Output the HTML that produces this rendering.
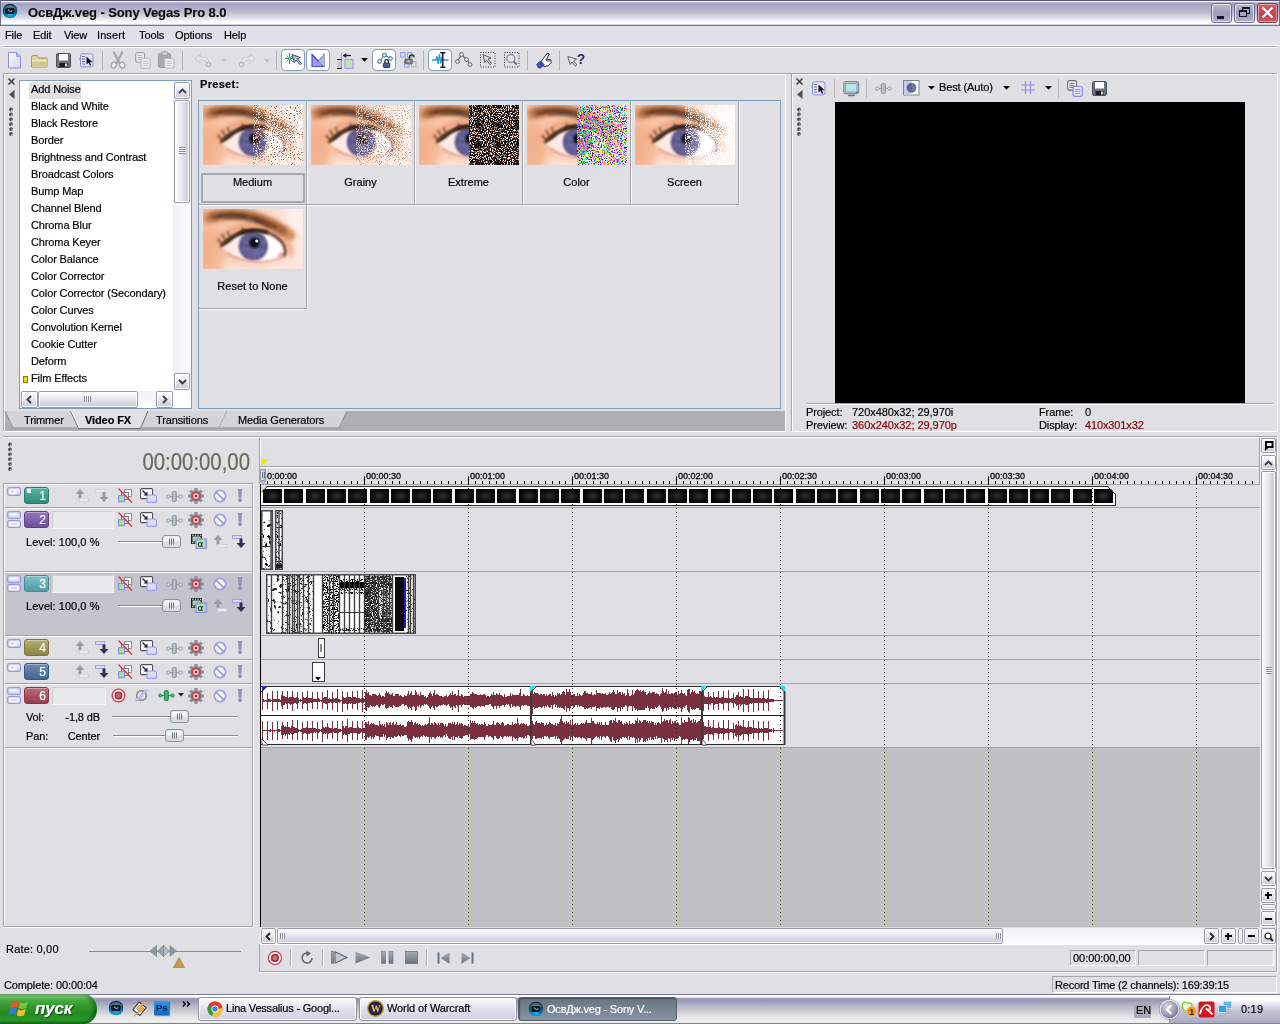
<!DOCTYPE html>
<html><head><meta charset="utf-8"><title>ОсвДж.veg - Sony Vegas Pro 8.0</title>
<style>
html,body{margin:0;padding:0}
body{width:1280px;height:1024px;position:relative;overflow:hidden;background:#e0dfe3;font:11px "Liberation Sans",sans-serif;letter-spacing:-0.12px;color:#000}
.a,.a *{position:absolute;box-sizing:border-box}
.t{position:absolute;white-space:nowrap;line-height:13px;-webkit-text-stroke:.18px currentColor}
svg{position:absolute;overflow:visible}
.hl{position:absolute;height:1px}
.vl{position:absolute;width:1px}
/* XP silver scrollbar button */
.sb{position:absolute;box-sizing:border-box;border:1px solid #9a9aae;border-radius:2px;background:linear-gradient(180deg,#fefefe 0%,#e4e4ee 50%,#c9c9d9 100%);box-shadow:inset 0 0 0 1px #fff}
.sbv{position:absolute;box-sizing:border-box;border:1px solid #9a9aae;border-radius:2px;background:linear-gradient(90deg,#fefefe 0%,#e4e4ee 50%,#c6c6d6 100%);box-shadow:inset 0 0 0 1px #fff}
.tog{position:absolute;box-sizing:border-box;border:1px solid #8a9db4;border-radius:4px;background:#fff}
.sep{position:absolute;width:1px;background:#b4b4b8}
.fld{position:absolute;box-sizing:border-box;border:1px solid;border-color:#a8a8ac #fff #fff #a8a8ac}
</style></head>
<body>
<div style="position:absolute;left:0;top:0;width:1280px;height:1024px;will-change:transform">
<!-- 10_title.html -->
<div class="a" style="left:0;top:0;width:1280px;height:26px;background:linear-gradient(180deg,#56567c 0,#56567c 1px,#f0f0f8 1px,#f0f0f8 2px,#b8b8d0 2px,#b8b8d0 3px,#a4a4c0 3px,#a6a6c2 5px,#b4b4cc 10px,#c6c6d8 14px,#dedee8 18px,#f6f6fa 21px,#ffffff 22.5px,#ffffff 24px,#d2d2de 24px,#d2d2de 25px,#74749a 25px,#74749a 26px)">
  <div style="left:0;top:0;width:1px;height:26px;background:#6e6e8f"></div>
  <div style="left:1279px;top:0;width:1px;height:26px;background:#6e6e8f"></div>
  <svg style="left:2px;top:3px" width="16" height="16" viewBox="0 0 16 16">
    <defs><radialGradient id="vg" cx="50%" cy="75%" r="70%"><stop offset="0" stop-color="#19b0ee"/><stop offset="0.55" stop-color="#0b74ad"/><stop offset="1" stop-color="#06243c"/></radialGradient></defs>
    <circle cx="8" cy="8" r="7.3" fill="url(#vg)"/>
    <path d="M2 6a6.5 6.5 0 0 1 12 0z" fill="#5f7f92" opacity=".75"/>
    <rect x="3.3" y="5" width="9.2" height="6" rx="1" fill="#17191d"/>
    <path d="M6 6.7l2.5 2.2" stroke="#6fd08c" stroke-width="1.1"/><path d="M8.6 9l1.6-1.7" stroke="#a98ae0" stroke-width="1.1"/>
  </svg>
  <div class="t" style="left:28px;top:5px;font:bold 13px 'Liberation Sans',sans-serif;line-height:15px;letter-spacing:-0.1px;color:#0a0a0a;text-shadow:0 0 1px rgba(255,255,255,.5)">ОсвДж.veg - Sony Vegas Pro 8.0</div>
  <!-- window buttons -->
  <div style="left:1211px;top:3px;width:21px;height:20px;border:1px solid #6e6e92;border-radius:3px;background:linear-gradient(180deg,#b9b9d2,#9c9cbb 55%,#b1b1cc);box-shadow:inset 0 0 0 1px rgba(255,255,255,.65)"><div style="left:5px;top:12px;width:7px;height:3px;background:#14142a"></div></div>
  <div style="left:1234px;top:3px;width:21px;height:20px;border:1px solid #6e6e92;border-radius:3px;background:linear-gradient(180deg,#b9b9d2,#9c9cbb 55%,#b1b1cc);box-shadow:inset 0 0 0 1px rgba(255,255,255,.65)">
     <div style="left:7px;top:3px;width:8px;height:7px;border:1px solid #14142a;border-top-width:2px"></div>
     <div style="left:4px;top:6px;width:8px;height:7px;border:1px solid #14142a;border-top-width:2px;background:#a5a5c2"></div></div>
  <div style="left:1257px;top:3px;width:21px;height:20px;border:1px solid #7e3a46;border-radius:3px;background:linear-gradient(180deg,#d4616a,#c2404b 55%,#cf5660);box-shadow:inset 0 0 0 1px rgba(255,255,255,.45)">
     <svg style="left:3px;top:2px" width="13" height="13" viewBox="0 0 13 13"><path d="M1.5 1.5l10 10M11.5 1.5l-10 10" stroke="#fff" stroke-width="2.2"/></svg></div>
</div>
<!-- menu bar -->
<div class="a" style="left:0;top:26px;width:1280px;height:19px;background:#dfe2eb">
  <div class="t" style="left:5px;top:3px">File</div>
  <div class="t" style="left:33px;top:3px">Edit</div>
  <div class="t" style="left:64px;top:3px">View</div>
  <div class="t" style="left:97px;top:3px;letter-spacing:.1px">Insert</div>
  <div class="t" style="left:139px;top:3px">Tools</div>
  <div class="t" style="left:175px;top:3px">Options</div>
  <div class="t" style="left:224px;top:3px">Help</div>
</div>
<div class="hl" style="left:0;top:45px;width:1280px;background:#fff"></div>
<div class="hl" style="left:3px;top:46px;width:1274px;background:#a4a4a8"></div>
<div class="hl" style="left:3px;top:47px;width:1274px;background:#fff"></div>

<!-- 20_toolbar.html -->
<div class="a" style="left:0;top:48px;width:1280px;height:26px">
  <div class="hl" style="left:3px;top:25px;width:1274px;background:#a4a4a8"></div>
  <!-- new -->
  <svg style="left:7px;top:4px" width="16" height="17" viewBox="0 0 16 17"><defs><linearGradient id="pg" x1="0" y1="0" x2="1" y2="1"><stop offset="0" stop-color="#fff"/><stop offset="1" stop-color="#cfd3ea"/></linearGradient></defs><path d="M1.5 .5h8l4 4v11.5h-12z" fill="url(#pg)" stroke="#8f8fe0"/><path d="M9.5 .5v4h4z" fill="#b7b7ee" stroke="#8f8fe0" stroke-width=".8"/></svg>
  <!-- open -->
  <svg style="left:31px;top:5px" width="17" height="15" viewBox="0 0 17 15"><path d="M.5 3.5v10.5h15.500v-9h-8l-1.500-2.500h-4.500z" fill="#d9cf9c" stroke="#a89a5e"/><path d="M1 7.500h15" stroke="#efe8c2" stroke-width="1.500"/><path d="M1 9h15v5h-15z" fill="#d3c78f"/></svg>
  <!-- save -->
  <svg style="left:56px;top:5px" width="15" height="15" viewBox="0 0 15 15"><rect x=".5" y=".5" width="14" height="14" rx="1.500" fill="#6c7280" stroke="#4c5160"/><rect x="3" y="1" width="9" height="6.500" fill="#fff"/><rect x="3.500" y="10" width="8" height="4" fill="#1c1e24"/><rect x="9" y="10.500" width="1.800" height="3" fill="#e8e8ee"/></svg>
  <!-- properties -->
  <svg style="left:79px;top:5px" width="15" height="15" viewBox="0 0 15 15"><rect x="1.500" y=".800" width="12.500" height="13" rx="2" fill="#e6e6fb" stroke="#8b8be6"/><path d="M3 3.500h3M3 6h3M3 8.500h3M3 11h3" stroke="#6a6a8a" stroke-width="1.200"/><path d="M0 6h1.500" stroke="#58b878"/><path d="M7.500 3.500v8l2-1.800 1.500 3 1.300-.700-1.500-2.800h2.700z" fill="#111"/></svg>
  <div class="sep" style="left:102px;top:3px;height:19px"></div>
  <!-- cut -->
  <svg style="left:110px;top:4px" width="16" height="17" viewBox="0 0 16 17"><path d="M4 .500l5.500 10.500M12 .500l-5.500 10.500" stroke="#a6a6aa" stroke-width="2.200" fill="none" stroke-linecap="round"/><ellipse cx="3.800" cy="13.200" rx="2.500" ry="2.900" fill="#f8f8fa" stroke="#a6a6aa" stroke-width="1.500" transform="rotate(25 3.800 13.200)"/><ellipse cx="12.200" cy="13.200" rx="2.500" ry="2.900" fill="#f8f8fa" stroke="#a6a6aa" stroke-width="1.500" transform="rotate(-25 12.200 13.200)"/></svg>
  <!-- copy -->
  <svg style="left:135px;top:4px" width="16" height="17" viewBox="0 0 16 17"><rect x=".600" y=".600" width="9" height="9.500" rx="2" fill="#ececee" stroke="#a2a2a6" stroke-width="1.200"/><path d="M2.500 3.500h5M2.500 5.500h5M2.500 7.500h5" stroke="#b4b4b8"/><rect x="6" y="6.500" width="9.400" height="9.800" rx="2" fill="#ececee" stroke="#c2c2c6" stroke-width="1.200"/><path d="M8 9.500h5.500M8 11.500h5.500M8 13.500h5.500" stroke="#c6c6ca"/></svg>
  <!-- paste -->
  <svg style="left:158px;top:3px" width="17" height="18" viewBox="0 0 17 18"><rect x=".600" y="2.500" width="12" height="14" rx="1.500" fill="#a9a9ad" stroke="#9a9a9e"/><rect x="3.500" y=".800" width="6" height="3.500" rx="1" fill="#cfcfd3" stroke="#9f9fa3"/><rect x="6.500" y="7.500" width="9.500" height="9.500" rx="2" fill="#ededf0" stroke="#bdbdc1" stroke-width="1.200"/><path d="M8.500 10.500h5.500M8.500 12.500h5.500M8.500 14.500h5.500" stroke="#c6c6ca"/></svg>
  <div class="sep" style="left:182px;top:3px;height:19px"></div>
  <!-- undo (disabled) -->
  <svg style="left:194px;top:5px" width="19" height="15" viewBox="0 0 19 15"><path d="M1 5.500l5.500-4.500-.5 3c5-.5 8.500 1.500 9.500 5.500l-3.500-.5c-1-2-3-2.800-6-2.300l.5 3.300z" fill="#e9e9ec" stroke="#cdcdd1" stroke-width="1.100" stroke-linejoin="round"/><circle cx="14.500" cy="11.500" r="2.100" fill="#e4e4e8" stroke="#b9b9bd" stroke-width="1.200"/></svg>
  <svg style="left:221px;top:11px" width="6" height="4" viewBox="0 0 6 4"><path d="M0 0h6l-3 3.500z" fill="#c6c6b6"/></svg>
  <!-- redo (disabled) -->
  <svg style="left:237px;top:5px" width="19" height="15" viewBox="0 0 19 15"><path d="M18 5.500l-5.500-4.500.5 3c-5-.5-8.500 1.500-9.500 5.500l3.500-.5c1-2 3-2.800 6-2.300l-.5 3.300z" fill="#e9e9ec" stroke="#cdcdd1" stroke-width="1.100" stroke-linejoin="round"/><circle cx="4.500" cy="11.500" r="2.100" fill="#e4e4e8" stroke="#b9b9bd" stroke-width="1.200"/></svg>
  <svg style="left:264px;top:11px" width="6" height="4" viewBox="0 0 6 4"><path d="M0 0h6l-3 3.500z" fill="#c6c6b6"/></svg>
  <div class="sep" style="left:276px;top:3px;height:19px"></div>
  <!-- auto ripple toggled -->
  <div class="tog" style="left:281px;top:1px;width:24px;height:22px"></div>
  <svg style="left:285px;top:5px" width="17" height="14" viewBox="0 0 17 14"><path d="M4.500 0v11" stroke="#2f9a3e" stroke-width="1.200"/><path d="M0 5.500h9" stroke="#2f9a3e" stroke-width="1.200"/><path d="M1.300 2.300l6.400 6.400M7.700 2.300l-6.400 6.400" stroke="#5a78e8" stroke-width=".9"/><rect x="3.500" y="4.500" width="2" height="2" fill="#42e0e8"/><path d="M7 1.500l8.500 3-3 1.300 4 4.700-1.500 1.200-4-4.700-1.700 2.800z" fill="#a9bede" stroke="#2e3e5e" stroke-width=".9"/></svg>
  <!-- M toggled -->
  <div class="tog" style="left:306px;top:1px;width:24px;height:22px"></div>
  <svg style="left:311px;top:6px" width="14" height="13" viewBox="0 0 14 13"><path d="M1 .5v12h12v-12l-5.500 7z" fill="#9f9fe6" stroke="#4848d8" stroke-width="1.100"/><path d="M1 .5l12 12" stroke="#4848d8" stroke-width="1.100"/><path d="M7.500 7.500l5.500-7v12z" fill="#a9bfd4"/></svg>
  <!-- snap -->
  <svg style="left:337px;top:5px" width="17" height="16" viewBox="0 0 17 16"><path d="M4.500 0v16" stroke="#9a9af0" stroke-width="1.200"/><rect x=".5" y="7" width="3.500" height="8" fill="#c8c8cc"/><path d="M0 6.500h4.500M0 15.500h4.500" stroke="#2a2a2e" stroke-width="1.200"/><rect x="8" y="6.500" width="8" height="8.800" fill="#bfe3c0" stroke="#9a9af0" stroke-width="1.100"/><path d="M6.500 2.500h7.500" stroke="#1c1c2c" stroke-width="1.300"/><path d="M5.800 2.500l3.500-2.500v5z" fill="#1c1c2c"/></svg>
  <svg style="left:361px;top:10px" width="7" height="4" viewBox="0 0 7 4"><path d="M0 0h7l-3.500 3.800z" fill="#000"/></svg>
  <!-- lock envelopes toggled -->
  <div class="tog" style="left:372px;top:1px;width:24px;height:22px"></div>
  <svg style="left:377px;top:4px" width="16" height="16" viewBox="0 0 16 16"><path d="M2.500 9.500l5-6.500 6 3.500" fill="none" stroke="#4a6a9a" stroke-width="1.100"/><circle cx="2.500" cy="9.500" r="1.900" fill="#dfe9fb" stroke="#4a6a9a"/><circle cx="7.500" cy="3" r="1.900" fill="#dfe9fb" stroke="#4a6a9a"/><circle cx="13.500" cy="6.500" r="1.900" fill="#dfe9fb" stroke="#4a6a9a"/><path d="M7.800 11v-1.500a1.800 1.800 0 0 1 3.600 0v1.500" fill="none" stroke="#20283c" stroke-width="1.300"/><rect x="6.300" y="11" width="6.600" height="4.500" rx=".8" fill="#4a5f9e" stroke="#20283c" stroke-width=".8"/></svg>
  <!-- ignore grouping -->
  <svg style="left:400px;top:4px" width="17" height="16" viewBox="0 0 17 16"><rect x=".6" y=".6" width="4.500" height="4.500" fill="#cfe6d2" stroke="#9a9af0"/><rect x="7.500" y=".6" width="4.500" height="4.500" fill="#cfe6d2" stroke="#9a9af0"/><rect x="4.500" y="10.500" width="4.500" height="4.500" fill="#cfe6d2" stroke="#9a9af0"/><rect x="11.500" y="9.500" width="4.500" height="5.500" fill="#cfe6d2" stroke="#b4b4c8"/><path d="M9.500 7.500v-2a2.300 2.300 0 0 1 4.600-.300" fill="none" stroke="#30303c" stroke-width="1.400"/><rect x="4.800" y="7" width="7.500" height="4.800" rx=".8" fill="#84848c" stroke="#50505a" stroke-width=".8"/><rect x="7.700" y="8.500" width="1.800" height="1.800" fill="#d8d8e0"/></svg>
  <div class="sep" style="left:423px;top:3px;height:19px"></div>
  <!-- normal edit tool toggled -->
  <div class="tog" style="left:428px;top:1px;width:24px;height:22px"></div>
  <svg style="left:432px;top:4px" width="17" height="16" viewBox="0 0 17 16"><path d="M0 8h4l1-4 1.200 8 1.300-10 1.200 9.500 1-5.500.8 2h6" fill="none" stroke="#1e9be0" stroke-width="1.300"/><path d="M10.800 1v14M8.300 .8h5M8.300 15.200h5" stroke="#14142a" stroke-width="1.400"/></svg>
  <!-- envelope tool -->
  <svg style="left:455px;top:4px" width="18" height="16" viewBox="0 0 18 16"><path d="M2.500 9.500l4-7 5 5 4 5" fill="none" stroke="#5a5a62" stroke-width="1.100"/><circle cx="2.500" cy="9.500" r="1.900" fill="#f4f4f8" stroke="#5a5a62"/><circle cx="6.500" cy="2.500" r="1.900" fill="#f4f4f8" stroke="#5a5a62"/><circle cx="11.500" cy="7.500" r="1.900" fill="#f4f4f8" stroke="#5a5a62"/><circle cx="15" cy="12.500" r="1.900" fill="#f4f4f8" stroke="#5a5a62"/></svg>
  <!-- selection tool -->
  <svg style="left:480px;top:4px" width="16" height="16" viewBox="0 0 16 16"><rect x=".5" y=".5" width="14.500" height="14.500" fill="none" stroke="#33333b" stroke-dasharray="1 1.500"/><path d="M3 2.500l8 3.500-3 1 3.500 4.500-1.500 1.200-3.500-4.500-1.800 2.500z" fill="#dcdce4" stroke="#50505c" stroke-width=".9"/></svg>
  <!-- zoom tool -->
  <svg style="left:504px;top:4px" width="16" height="16" viewBox="0 0 16 16"><rect x=".5" y=".5" width="14.500" height="14.500" fill="none" stroke="#33333b" stroke-dasharray="1 1.500"/><circle cx="6.800" cy="6.500" r="4" fill="#dfe6f2" stroke="#8a8f9a" stroke-width="1.300"/><path d="M9.800 9.500l3 3" stroke="#72727a" stroke-width="2"/></svg>
  <div class="sep" style="left:527px;top:3px;height:19px"></div>
  <!-- hand / plugin -->
  <svg style="left:535px;top:3px" width="18" height="18" viewBox="0 0 18 18"><path d="M6 10.500l6.500-8.500 1.800 1-3.300 6 4.500-.5.800 3-3.500 3.500-4 .500z" fill="#fff" stroke="#22222a" stroke-width="1"/><path d="M12.200 9.500l1.200 1.500M13.800 9l1.200 1.500" stroke="#22222a" stroke-width=".8"/><path d="M1.500 13.500l3.800-3.500 4 3.500-3.600 3.500h-2.200z" fill="#3a4ec8" stroke="#1a2a7a" stroke-width=".6"/></svg>
  <div class="sep" style="left:559px;top:3px;height:19px"></div>
  <!-- what's this help -->
  <svg style="left:567px;top:4px" width="18" height="17" viewBox="0 0 18 17"><path d="M.8 4.500l9 2.500-3.200 1.800 3.200 4.200-1.500 1.200-3.200-4.200-2 2.500z" fill="#e4e4ea" stroke="#55555f" stroke-width=".9"/><text x="9.800" y="11.500" font-family="Liberation Sans,sans-serif" font-weight="bold" font-size="14" fill="#2c2c5e" letter-spacing="0">?</text></svg>
</div>

<!-- 30_defs.html -->
<svg width="0" height="0" style="left:0;top:0"><defs>
  <filter id="bl6" filterUnits="userSpaceOnUse" x="-10" y="-10" width="120" height="80"><feGaussianBlur stdDeviation="0.9"/></filter>
  <filter id="bl12" filterUnits="userSpaceOnUse" x="-10" y="-10" width="120" height="80"><feGaussianBlur stdDeviation="2.1"/></filter>
  <filter id="bl3" filterUnits="userSpaceOnUse" x="-20" y="-20" width="140" height="100"><feGaussianBlur stdDeviation="3.5"/></filter>
  <linearGradient id="skin" x1="0" y1="0" x2="1" y2="0"><stop offset="0" stop-color="#f5bd9c"/><stop offset=".3" stop-color="#f8ccb4"/><stop offset=".75" stop-color="#fcddd0"/><stop offset="1" stop-color="#fee8e0"/></linearGradient>
  <radialGradient id="iris" cx="50%" cy="50%" r="50%"><stop offset="0" stop-color="#4a4870"/><stop offset=".45" stop-color="#625e96"/><stop offset=".85" stop-color="#605c92"/><stop offset="1" stop-color="#45426e"/></radialGradient>
  <clipPath id="ec"><rect x="0" y="0" width="100" height="60"/></clipPath>
  <symbol id="eye" viewBox="0 0 100 60">
    <g clip-path="url(#ec)">
    <rect width="100" height="60" fill="url(#skin)"/>
    <ellipse cx="8" cy="40" rx="12" ry="22" fill="#f0a276" opacity=".45" filter="url(#bl3)"/>
    <ellipse cx="45" cy="17" rx="30" ry="6" fill="#f5c0a0" opacity=".8" filter="url(#bl3)"/>
    <ellipse cx="60" cy="58" rx="42" ry="8" fill="#fde6dc" opacity=".9" filter="url(#bl3)"/>
    <ellipse cx="94" cy="12" rx="12" ry="14" fill="#fff2ec" opacity=".9" filter="url(#bl3)"/>
    <path d="M14 35Q24 19 46 17Q70 17 82 30Q88 38 88 47" fill="none" stroke="#ee9f78" stroke-width="6" opacity=".8" filter="url(#bl12)"/>
    <!-- eyebrow -->
    <path d="M5 9Q26 2 48 7Q66 11 87 26" fill="none" stroke="#d28c60" stroke-width="11" stroke-linecap="round" filter="url(#bl12)"/>
    <path d="M9 8Q26 3.500 46 7.500Q62 11 80 22" fill="none" stroke="#9a5c38" stroke-width="7.500" stroke-linecap="round" filter="url(#bl12)"/>
    <path d="M12 8Q28 4 46 8Q58 10.500 72 18" fill="none" stroke="#7a4a30" stroke-width="3.600" stroke-linecap="round" filter="url(#bl6)"/>
    <path d="M16 6.500Q30 4.500 44 7.500M22 9.500Q36 8 50 11.500Q58 13.500 66 17.500M30 6l10 1.500M50 9l10 3.500" fill="none" stroke="#4a3226" stroke-width="1.100" stroke-linecap="round" filter="url(#bl6)"/>
    <path d="M36 10l8 1.200M45 11.500l6 1" stroke="#8c96a6" stroke-width="1.100" opacity=".7" filter="url(#bl6)"/>
    <!-- sclera -->
    <path d="M19 38Q28 26 46 22Q66 21 78 33Q83 40 81 46Q72 52 52 53Q34 52 19 38z" fill="#fdeae6" filter="url(#bl6)"/>
    <path d="M62 26Q76 30 81 44Q74 50 62 51z" fill="#ffffff" filter="url(#bl6)"/>
    <ellipse cx="78.500" cy="46" rx="3.500" ry="3" fill="#f2aaa4" filter="url(#bl6)"/>
    <!-- iris -->
    <circle cx="50.300" cy="37" r="14.500" fill="url(#iris)" filter="url(#bl6)"/>
    <path d="M50.500 37l-12-6M50.500 37l-13 5M50.500 37l2 14M50.500 37l12 7M50.500 37l13-5M50.500 37l-5 13M50.500 37l7 12M50.500 37l-10 10" stroke="#9a96d0" stroke-width="1" opacity=".55" filter="url(#bl6)"/>
    <path d="M50.500 37l-14 0M50.500 37l9 -11M50.500 37l-8 12M50.500 37l14 2" stroke="#4a4678" stroke-width="1" opacity=".5" filter="url(#bl6)"/>
    <circle cx="51.400" cy="33.800" r="5.200" fill="#0c0c12" filter="url(#bl6)"/>
    <circle cx="53.800" cy="32" r="1.600" fill="#fff"/>
    <path d="M34 27Q48 20 66 25L66 21Q48 16 34 23z" fill="#3a2a3a" opacity=".5" filter="url(#bl6)"/>
    <!-- upper lid + lashes -->
    <path d="M18 37Q27 25 46 21.500Q67 20 79 33Q84 40 81.500 46.500" fill="none" stroke="#643c28" stroke-width="2.600" stroke-linecap="round" filter="url(#bl6)"/>
    <path d="M18 37.500Q23 28.500 38 22.800Q44 21.300 50 21.200L50 23Q38 24.500 31 29.500Q25 35.500 18 37.500z" fill="#3c281e" filter="url(#bl6)"/>
    <path d="M38 23Q50 19.500 64 23.500" fill="none" stroke="#2a1a16" stroke-width="2.400" filter="url(#bl6)"/>
    <path d="M20 35Q16 33 15 30M23 31Q20 28 19 25M27 28Q25 25 25 22" stroke="#5a3624" stroke-width="1.400" fill="none" filter="url(#bl6)"/>
    <path d="M39 18l3 5" stroke="#50301f" stroke-width="1.300" filter="url(#bl6)"/>
    <!-- lower lid -->
    <path d="M23 44Q40 54 60 53Q74 52 81 46.500" fill="none" stroke="#e49c80" stroke-width="1.500" filter="url(#bl6)"/>
    <path d="M28 52Q46 59 68 56" fill="none" stroke="#eeb096" stroke-width="1.600" opacity=".7" filter="url(#bl12)"/>
    </g>
  </symbol>
  <!-- speckle filters: source alpha * thresholded noise -->
  <filter id="nW" x="0" y="0" width="100%" height="100%" color-interpolation-filters="sRGB"><feTurbulence type="fractalNoise" baseFrequency="0.95" numOctaves="1" seed="3"/><feColorMatrix type="matrix" values="0 0 0 0 1 0 0 0 0 1 0 0 0 0 1 9 0 0 0 -4.600"/><feComposite operator="in" in2="SourceGraphic"/></filter>
  <filter id="nW2" x="0" y="0" width="100%" height="100%" color-interpolation-filters="sRGB"><feTurbulence type="fractalNoise" baseFrequency="0.95" numOctaves="1" seed="11"/><feColorMatrix type="matrix" values="0 0 0 0 1 0 0 0 0 1 0 0 0 0 1 0 9 0 0 -4.300"/><feComposite operator="in" in2="SourceGraphic"/></filter>
  <filter id="nBr" x="0" y="0" width="100%" height="100%" color-interpolation-filters="sRGB"><feTurbulence type="fractalNoise" baseFrequency="0.95" numOctaves="1" seed="7"/><feColorMatrix type="matrix" values="0 0 0 0 .62 0 0 0 0 .32 0 0 0 0 .18 0 0 9 0 -4.900"/><feComposite operator="in" in2="SourceGraphic"/></filter>
  <filter id="nBk" x="0" y="0" width="100%" height="100%" color-interpolation-filters="sRGB"><feTurbulence type="fractalNoise" baseFrequency="0.8" numOctaves="1" seed="5"/><feColorMatrix type="matrix" values="0 0 0 0 0 0 0 0 0 0 0 0 0 0 0 12 0 0 0 -5.700"/><feComposite operator="in" in2="SourceGraphic"/></filter>
  <filter id="nBk2" x="0" y="0" width="100%" height="100%" color-interpolation-filters="sRGB"><feTurbulence type="fractalNoise" baseFrequency="0.85" numOctaves="1" seed="21"/><feColorMatrix type="matrix" values="0 0 0 0 0 0 0 0 0 0 0 0 0 0 0 12 0 0 0 -7"/><feComposite operator="in" in2="SourceGraphic"/></filter>
  <filter id="nBlob" x="0" y="0" width="100%" height="100%" color-interpolation-filters="sRGB"><feTurbulence type="fractalNoise" baseFrequency="0.28" numOctaves="2" seed="4"/><feColorMatrix type="matrix" values="0 0 0 0 0 0 0 0 0 0 0 0 0 0 0 14 0 0 0 -8.700"/><feComposite operator="in" in2="SourceGraphic"/></filter>
  <filter id="nCol" x="0" y="0" width="100%" height="100%" color-interpolation-filters="sRGB"><feTurbulence type="fractalNoise" baseFrequency="0.9" numOctaves="1" seed="9"/><feColorMatrix type="matrix" values="7 0 0 0 -3 0 7 0 0 -3 0 0 7 0 -3 0 0 0 0 1"/><feComposite operator="in" in2="SourceGraphic"/></filter>
  <filter id="nColA" x="0" y="0" width="100%" height="100%" color-interpolation-filters="sRGB"><feTurbulence type="fractalNoise" baseFrequency="0.9" numOctaves="1" seed="9"/><feColorMatrix type="matrix" values="7 0 0 0 -3 0 7 0 0 -3 0 0 7 0 -3 0 0 0 9 -4.300"/><feComposite operator="in" in2="SourceGraphic"/></filter>
  <filter id="nColB" x="0" y="0" width="100%" height="100%" color-interpolation-filters="sRGB"><feTurbulence type="fractalNoise" baseFrequency="0.9" numOctaves="1" seed="33"/><feColorMatrix type="matrix" values="9 0 0 0 -4 0 9 0 0 -4 0 0 9 0 -4 0 0 0 9 -4.600"/><feComposite operator="in" in2="SourceGraphic"/></filter>
  <linearGradient id="fadeR" x1="0" y1="0" x2="1" y2="0"><stop offset="0" stop-color="#fff" stop-opacity=".15"/><stop offset="1" stop-color="#fff" stop-opacity="1"/></linearGradient>
</defs></svg>

<!-- 31_dock_left.html -->
<div class="a" style="left:0;top:74px;width:790px;height:360px">
  <!-- frame -->
  <div class="hl" style="left:3px;top:0;width:784px;background:#fff"></div>
  <div class="vl" style="left:3px;top:0;height:358px;background:#a4a4a8"></div>
  <div class="vl" style="left:4px;top:0;height:358px;background:#fff"></div>
  <!-- gutter icons -->
  <svg style="left:8px;top:4px" width="7" height="7" viewBox="0 0 7 7"><path d="M.5.5l6 6M6.500.5l-6 6" stroke="#3c3c44" stroke-width="1.500"/></svg>
  <svg style="left:9px;top:16px" width="6" height="9" viewBox="0 0 6 9"><path d="M5.500 0v9l-5.500-4.500z" fill="#50505a"/></svg>
  <svg style="left:8px;top:33px" width="6" height="30" viewBox="0 0 6 30"><g fill="#4e4e58"><circle cx="3" cy="2.500" r="1.900"/><circle cx="3" cy="7.400" r="1.900"/><circle cx="3" cy="12.300" r="1.900"/><circle cx="3" cy="17.200" r="1.900"/><circle cx="3" cy="22.100" r="1.900"/><circle cx="3" cy="27" r="1.900"/></g><g fill="#c8c8d0"><circle cx="3.900" cy="3.400" r=".8"/><circle cx="3.900" cy="8.300" r=".8"/><circle cx="3.900" cy="13.200" r=".8"/><circle cx="3.900" cy="18.100" r=".8"/><circle cx="3.900" cy="23" r=".8"/><circle cx="3.900" cy="27.900" r=".8"/></g></svg>
  <!-- list box -->
  <div style="left:19px;top:6px;width:173px;height:329px;border:1px solid #7f9db9;background:#fff"></div>
  <div style="left:29px;top:8px;width:52px;height:17px;background:#e0dfe3"></div>
  <div class="t" style="left:31px;top:9px">Add Noise</div>
  <div class="t" style="left:31px;top:26px">Black and White</div>
  <div class="t" style="left:31px;top:43px">Black Restore</div>
  <div class="t" style="left:31px;top:60px">Border</div>
  <div class="t" style="left:31px;top:77px">Brightness and Contrast</div>
  <div class="t" style="left:31px;top:94px">Broadcast Colors</div>
  <div class="t" style="left:31px;top:111px">Bump Map</div>
  <div class="t" style="left:31px;top:128px">Channel Blend</div>
  <div class="t" style="left:31px;top:145px">Chroma Blur</div>
  <div class="t" style="left:31px;top:162px">Chroma Keyer</div>
  <div class="t" style="left:31px;top:179px">Color Balance</div>
  <div class="t" style="left:31px;top:196px">Color Corrector</div>
  <div class="t" style="left:31px;top:213px">Color Corrector (Secondary)</div>
  <div class="t" style="left:31px;top:230px">Color Curves</div>
  <div class="t" style="left:31px;top:247px">Convolution Kernel</div>
  <div class="t" style="left:31px;top:264px">Cookie Cutter</div>
  <div class="t" style="left:31px;top:281px">Deform</div>
  <div class="t" style="left:31px;top:298px">Film Effects</div>
  <div style="left:23px;top:302px;width:5px;height:7px;background:#e8e000;border:1px solid #8a7a00"></div>
  <!-- vertical scrollbar -->
  <div style="left:173px;top:7px;width:18px;height:310px;background:linear-gradient(90deg,#f0f0f6,#fdfdff)"></div>
  <div class="sb" style="left:174px;top:8px;width:16px;height:17px"></div>
  <svg style="left:178px;top:14px" width="9" height="6" viewBox="0 0 9 6"><path d="M1 5l3.500-3.500 3.500 3.500" fill="none" stroke="#3a3a44" stroke-width="1.800"/></svg>
  <div class="sbv" style="left:174px;top:26px;width:16px;height:103px"></div>
  <div style="left:179px;top:73px;width:6px;height:7px;background:repeating-linear-gradient(180deg,#8a8a9e 0,#8a8a9e 1px,#fff 1px,#fff 2px)"></div>
  <div class="sb" style="left:174px;top:299px;width:16px;height:17px"></div>
  <svg style="left:178px;top:305px" width="9" height="6" viewBox="0 0 9 6"><path d="M1 1l3.500 3.500 3.500-3.500" fill="none" stroke="#3a3a44" stroke-width="1.800"/></svg>
  <!-- horizontal scrollbar -->
  <div style="left:20px;top:317px;width:153px;height:17px;background:linear-gradient(180deg,#f0f0f6,#fdfdff)"></div>
  <div class="sb" style="left:21px;top:317px;width:17px;height:17px"></div>
  <svg style="left:26px;top:321px" width="6" height="9" viewBox="0 0 6 9"><path d="M5 1l-3.500 3.500 3.500 3.500" fill="none" stroke="#3a3a44" stroke-width="1.800"/></svg>
  <div class="sb" style="left:38px;top:317px;width:100px;height:17px"></div>
  <div style="left:84px;top:322px;width:7px;height:6px;background:repeating-linear-gradient(90deg,#8a8a9e 0,#8a8a9e 1px,#fff 1px,#fff 2px)"></div>
  <div class="sb" style="left:156px;top:317px;width:17px;height:17px"></div>
  <svg style="left:162px;top:321px" width="6" height="9" viewBox="0 0 6 9"><path d="M1 1l3.500 3.500-3.500 3.500" fill="none" stroke="#3a3a44" stroke-width="1.800"/></svg>
  <div style="left:173px;top:317px;width:18px;height:17px;background:#fff"></div>
  <!-- Preset -->
  <div class="t" style="left:200px;top:4px;font-weight:bold;letter-spacing:.3px">Preset:</div>
  <div style="left:198px;top:26px;width:583px;height:309px;border:1px solid #7f9db9;background:#e0dfe3"></div>
</div>

<!-- 32_presets.html -->
<div class="a" style="left:0;top:0;width:790px;height:420px;pointer-events:none">
<div class="vl" style="left:306px;top:101px;height:104px;background:#a2a2a6"></div><div class="vl" style="left:307px;top:101px;height:103px;background:#fff"></div><div class="hl" style="left:199px;top:204px;width:108px;background:#a2a2a6"></div><div class="hl" style="left:199px;top:205px;width:107px;background:#fff"></div><svg style="left:203px;top:105px" width="100" height="60" viewBox="0 0 100 60"><use href="#eye" width="100" height="60"/><rect x="50" y="0" width="50" height="60" fill="#fff" filter="url(#nW)" opacity=".95"/><rect x="50" y="0" width="50" height="60" fill="#a05030" filter="url(#nBr)" opacity=".9"/><rect x="62" y="0" width="38" height="60" fill="#fff" filter="url(#nW2)" opacity=".8"/></svg><div style="left:201px;top:173px;width:104px;height:30px;border:2px solid #a9a9ad"></div><div class="t" style="left:199px;top:176px;width:107px;text-align:center;letter-spacing:0">Medium</div>
<div class="vl" style="left:414px;top:101px;height:104px;background:#a2a2a6"></div><div class="vl" style="left:415px;top:101px;height:103px;background:#fff"></div><div class="hl" style="left:307px;top:204px;width:108px;background:#a2a2a6"></div><div class="hl" style="left:307px;top:205px;width:107px;background:#fff"></div><svg style="left:311px;top:105px" width="100" height="60" viewBox="0 0 100 60"><use href="#eye" width="100" height="60"/><rect x="45" y="0" width="55" height="60" fill="#fff" filter="url(#nW2)" opacity=".7"/><rect x="45" y="0" width="55" height="60" fill="#a05030" filter="url(#nBr)" opacity=".55"/><rect x="70" y="0" width="30" height="60" fill="#fff" filter="url(#nW)" opacity=".7"/></svg><div class="t" style="left:307px;top:176px;width:107px;text-align:center;letter-spacing:0">Grainy</div>
<div class="vl" style="left:522px;top:101px;height:104px;background:#a2a2a6"></div><div class="vl" style="left:523px;top:101px;height:103px;background:#fff"></div><div class="hl" style="left:415px;top:204px;width:108px;background:#a2a2a6"></div><div class="hl" style="left:415px;top:205px;width:107px;background:#fff"></div><svg style="left:419px;top:105px" width="100" height="60" viewBox="0 0 100 60"><use href="#eye" width="100" height="60"/><rect x="50" y="0" width="50" height="60" fill="#140a06"/><rect x="50" y="0" width="50" height="60" fill="#b0502c" filter="url(#nBr)"/><rect x="50" y="0" width="50" height="60" fill="#fff" filter="url(#nW)"/><rect x="50" y="0" width="50" height="60" fill="#fff" filter="url(#nBk2)"/></svg><div class="t" style="left:415px;top:176px;width:107px;text-align:center;letter-spacing:0">Extreme</div>
<div class="vl" style="left:630px;top:101px;height:104px;background:#a2a2a6"></div><div class="vl" style="left:631px;top:101px;height:103px;background:#fff"></div><div class="hl" style="left:523px;top:204px;width:108px;background:#a2a2a6"></div><div class="hl" style="left:523px;top:205px;width:107px;background:#fff"></div><svg style="left:527px;top:105px" width="100" height="60" viewBox="0 0 100 60"><use href="#eye" width="100" height="60"/><rect x="50" y="0" width="50" height="60" fill="#fff" opacity=".4"/><rect x="50" y="0" width="50" height="60" fill="#fff" filter="url(#nColA)" opacity=".95"/><rect x="50" y="0" width="50" height="60" fill="#fff" filter="url(#nColB)" opacity=".9"/></svg><div class="t" style="left:523px;top:176px;width:107px;text-align:center;letter-spacing:0">Color</div>
<div class="vl" style="left:738px;top:101px;height:104px;background:#a2a2a6"></div><div class="vl" style="left:739px;top:101px;height:103px;background:#fff"></div><div class="hl" style="left:631px;top:204px;width:108px;background:#a2a2a6"></div><div class="hl" style="left:631px;top:205px;width:107px;background:#fff"></div><svg style="left:635px;top:105px" width="100" height="60" viewBox="0 0 100 60"><use href="#eye" width="100" height="60"/><rect x="50" y="0" width="50" height="60" fill="url(#fadeR)" opacity=".55"/><rect x="50" y="0" width="50" height="60" fill="#fff" filter="url(#nW)" opacity=".9"/><rect x="70" y="0" width="30" height="60" fill="#fff" filter="url(#nW2)" opacity=".9"/></svg><div class="t" style="left:631px;top:176px;width:107px;text-align:center;letter-spacing:0">Screen</div>
<div class="vl" style="left:306px;top:205px;height:104px;background:#a2a2a6"></div><div class="vl" style="left:307px;top:205px;height:103px;background:#fff"></div><div class="hl" style="left:199px;top:308px;width:108px;background:#a2a2a6"></div><div class="hl" style="left:199px;top:309px;width:107px;background:#fff"></div><svg style="left:203px;top:209px" width="100" height="60" viewBox="0 0 100 60"><use href="#eye" width="100" height="60"/></svg><div class="t" style="left:199px;top:280px;width:107px;text-align:center;letter-spacing:0">Reset to None</div>
</div>
<!-- 35_tabs.html -->
<div class="a" style="left:0;top:409px;width:790px;height:30px">
  <!-- tab strip dark -->
  <div style="left:5px;top:2px;width:780px;height:20px;background:#afaeb3"></div>
  <div class="vl" style="left:785px;top:-335px;height:357px;background:#fff"></div>
  <div class="vl" style="left:786px;top:-335px;height:357px;background:#e0dfe3"></div>
  <div class="hl" style="left:3px;top:22px;width:783px;background:#fff"></div>
  <svg style="left:0;top:2px" width="400" height="20" viewBox="0 0 400 20">
    <!-- inactive tabs -->
    <path d="M5 0h66l8 17h-66z" fill="#d4d3d8"/>
    <path d="M5 0l8 17h64" fill="none" stroke="#8e8e94"/>
    <path d="M147 0h80l-8 17h-78l-2-4z" fill="#d4d3d8"/>
    <path d="M141 17h78l8-17" fill="none" stroke="#8e8e94"/>
    <path d="M227 0h120l-8 17h-120z" fill="#d4d3d8"/>
    <path d="M219 17h120l8-17" fill="none" stroke="#8e8e94"/>
    <!-- active tab -->
    <path d="M70 0h78l-7.500 17.500h-62z" fill="#e0dfe3"/>
    <path d="M70.500 0l8 17.500h62l7.500-17.500" fill="none" stroke="#6e6e76"/>
    <path d="M71.500 0l8 16.500" fill="none" stroke="#fff"/>
  </svg>
  <div class="t" style="left:24px;top:5px">Trimmer</div>
  <div class="t" style="left:85px;top:5px;font-weight:bold;letter-spacing:-.1px">Video FX</div>
  <div class="t" style="left:156px;top:5px">Transitions</div>
  <div class="t" style="left:238px;top:5px">Media Generators</div>
</div>

<!-- 40_preview.html -->
<div class="a" style="left:787px;top:74px;width:493px;height:360px">
  <div class="hl" style="left:4px;top:0;width:486px;background:#fff"></div>
  <div class="vl" style="left:4px;top:0;height:358px;background:#a4a4a8"></div>
  <div class="vl" style="left:5px;top:0;height:358px;background:#fff"></div>
    <div class="vl" style="left:490px;top:0;height:358px;background:#fff"></div>
  <!-- gutter -->
  <svg style="left:9px;top:4px" width="7" height="7" viewBox="0 0 7 7"><path d="M.5.5l6 6M6.500.5l-6 6" stroke="#3c3c44" stroke-width="1.500"/></svg>
  <svg style="left:10px;top:16px" width="6" height="9" viewBox="0 0 6 9"><path d="M5.500 0v9l-5.500-4.500z" fill="#50505a"/></svg>
  <svg style="left:9px;top:33px" width="6" height="30" viewBox="0 0 6 30"><g fill="#4e4e58"><circle cx="3" cy="2.500" r="1.900"/><circle cx="3" cy="7.400" r="1.900"/><circle cx="3" cy="12.300" r="1.900"/><circle cx="3" cy="17.200" r="1.900"/><circle cx="3" cy="22.100" r="1.900"/><circle cx="3" cy="27" r="1.900"/></g><g fill="#c8c8d0"><circle cx="3.900" cy="3.400" r=".8"/><circle cx="3.900" cy="8.300" r=".8"/><circle cx="3.900" cy="13.200" r=".8"/><circle cx="3.900" cy="18.100" r=".8"/><circle cx="3.900" cy="23" r=".8"/><circle cx="3.900" cy="27.900" r=".8"/></g></svg>
  <!-- toolbar -->
  <svg style="left:24px;top:7px" width="15" height="15" viewBox="0 0 15 15"><rect x="1.500" y=".800" width="12.500" height="13" rx="2" fill="#e6e6fb" stroke="#8b8be6"/><path d="M3 3.500h3M3 6h3M3 8.500h3M3 11h3" stroke="#6a6a8a" stroke-width="1.200"/><path d="M0 6h1.500" stroke="#58b878"/><path d="M7.500 3.500v8l2-1.800 1.500 3 1.300-.700-1.500-2.800h2.700z" fill="#111"/></svg>
  <div class="sep" style="left:47px;top:5px;height:19px"></div>
  <svg style="left:56px;top:7px" width="17" height="16" viewBox="0 0 17 16"><rect x=".700" y=".700" width="15" height="12" rx="2.500" fill="#d0d0d8" stroke="#8a8a92" stroke-width="1.200"/><rect x="2.500" y="2.500" width="11.500" height="8.500" fill="#b8e8e6" stroke="#8c8cf0" stroke-width="1"/><path d="M5 14.500h7" stroke="#74747c" stroke-width="1.600"/><circle cx="14" cy="11.500" r="1.300" fill="#35b56a"/></svg>
  <div class="sep" style="left:79px;top:5px;height:19px"></div>
  <svg style="left:88px;top:9px" width="17" height="11" viewBox="0 0 17 11"><path d="M2.500 5.500h12" stroke="#9aa0ac" stroke-width="1.200"/><rect x="6.300" y=".600" width="4" height="9.800" rx="1" fill="#b9bdc8" stroke="#8e94a0"/><circle cx="2.300" cy="5.500" r="1.700" fill="#e6e6ec" stroke="#8e94a0"/><circle cx="14.500" cy="5.500" r="1.700" fill="#e6e6ec" stroke="#8e94a0"/></svg>
  <svg style="left:116px;top:6px" width="17" height="16" viewBox="0 0 17 16"><rect x=".5" y=".5" width="15.500" height="14.500" fill="#fff" stroke="#84848c"/><rect x="1" y="1" width="7.500" height="13.500" fill="#c8c8f0"/><circle cx="8.500" cy="7.800" r="4.800" fill="#5c6484"/><path d="M8.500 3a4.800 4.800 0 0 1 0 9.600z" fill="#70789a"/></svg>
  <svg style="left:141px;top:12px" width="7" height="4" viewBox="0 0 7 4"><path d="M0 0h7l-3.500 3.800z" fill="#000"/></svg>
  <div class="t" style="left:152px;top:7px">Best (Auto)</div>
  <svg style="left:216px;top:12px" width="7" height="4" viewBox="0 0 7 4"><path d="M0 0h7l-3.500 3.800z" fill="#000"/></svg>
  <svg style="left:234px;top:7px" width="14" height="13" viewBox="0 0 14 13"><path d="M4.500 0v13M9.500 0v13M0 4h14M0 9h14" stroke="#8a8ae6" stroke-width="1.100"/></svg>
  <svg style="left:258px;top:12px" width="7" height="4" viewBox="0 0 7 4"><path d="M0 0h7l-3.500 3.800z" fill="#000"/></svg>
  <div class="sep" style="left:271px;top:5px;height:19px"></div>
  <svg style="left:280px;top:6px" width="16" height="17" viewBox="0 0 16 17"><rect x=".600" y=".600" width="9" height="9.500" rx="2" fill="#f2f2f4" stroke="#6a6a72" stroke-width="1.100"/><path d="M2.500 3.500h5M2.500 5.500h5M2.500 7.500h5" stroke="#6a6a72"/><rect x="6" y="6.500" width="9.400" height="9.800" rx="2" fill="#e4e4fb" stroke="#8b8be6" stroke-width="1.200"/><path d="M8 9.500h5.500M8 11.500h5.500M8 13.500h5.500" stroke="#9a9ad8"/></svg>
  <svg style="left:305px;top:7px" width="15" height="15" viewBox="0 0 15 15"><rect x=".5" y=".5" width="14" height="14" rx="1.500" fill="#6c7280" stroke="#4c5160"/><rect x="3" y="1" width="9" height="6.500" fill="#fff"/><rect x="3.500" y="10" width="8" height="4" fill="#1c1e24"/><rect x="9" y="10.500" width="1.800" height="3" fill="#e8e8ee"/></svg>
  <!-- preview black -->
  <div style="left:48px;top:28px;width:410px;height:301px;background:#000"></div>
  <div class="hl" style="left:20px;top:329px;width:466px;background:#a4a4a8"></div>
  <div class="hl" style="left:20px;top:330px;width:466px;background:#fff"></div>
  <div class="t" style="left:19px;top:332px">Project:</div>
  <div class="t" style="left:65px;top:332px;letter-spacing:-.05px">720x480x32; 29,970i</div>
  <div class="t" style="left:19px;top:345px">Preview:</div>
  <div class="t" style="left:65px;top:345px;color:#800008;letter-spacing:-.05px">360x240x32; 29,970p</div>
  <div class="t" style="left:252px;top:332px">Frame:</div>
  <div class="t" style="left:298px;top:332px">0</div>
  <div class="t" style="left:252px;top:345px">Display:</div>
  <div class="t" style="left:298px;top:345px;color:#800008">410x301x32</div>
</div>
<!-- dock bottom etched lines -->
<div class="hl" style="left:791px;top:431px;width:486px;background:#fff"></div>
<div class="hl" style="left:3px;top:436px;width:1274px;background:#a4a4a8"></div>
<div class="hl" style="left:3px;top:437px;width:1274px;background:#fff"></div>

<!-- 50_timeline.html -->
<div class="a" style="left:0;top:0;width:1280px;height:1024px;pointer-events:none">
<div style="left:260px;top:748px;width:1000px;height:179px;background:#c0bfc3"></div>
<div class="vl" style="left:259px;top:438px;height:46px;background:#a4a4a8"></div>
<div class="vl" style="left:260px;top:438px;height:29px;background:#fff"></div>
<div class="hl" style="left:260px;top:466px;width:999px;background:#a4a4a8"></div>
<div class="hl" style="left:260px;top:467px;width:999px;background:#fff"></div>
<div class="hl" style="left:261px;top:484px;width:999px;background:#a4a4a8"></div><div class="vl" style="left:1259px;top:438px;height:47px;background:#a4a4a8"></div><div class="vl" style="left:1260px;top:438px;height:490px;background:#f0f0f2"></div>
<div class="hl" style="left:261px;top:507px;width:999px;background:#a4a4a8"></div>
<div class="hl" style="left:261px;top:571px;width:999px;background:#a4a4a8"></div>
<div class="hl" style="left:261px;top:635px;width:999px;background:#a4a4a8"></div>
<div class="hl" style="left:261px;top:659px;width:999px;background:#a4a4a8"></div>
<div class="hl" style="left:261px;top:683px;width:999px;background:#a4a4a8"></div>
<div class="hl" style="left:261px;top:747px;width:999px;background:#a4a4a8"></div>
<svg style="left:0;top:0" width="1280" height="1024" viewBox="0 0 1280 1024" shape-rendering="crispEdges"><path d="M267.5 481V484M274.5 481V484M281.5 481V484M288.5 481V484M295.5 481V484M302.5 481V484M309.5 481V484M316.5 481V484M323.5 481V484M330.5 481V484M337.5 481V484M344.5 481V484M351.5 481V484M357.5 481V484M364.5 476V484M371.5 481V484M378.5 481V484M385.5 481V484M392.5 481V484M399.5 481V484M406.5 481V484M413.5 481V484M420.5 481V484M427.5 481V484M434.5 481V484M441.5 481V484M448.5 481V484M455.5 481V484M461.5 481V484M468.5 476V484M475.5 481V484M482.5 481V484M489.5 481V484M496.5 481V484M503.5 481V484M510.5 481V484M517.5 481V484M524.5 481V484M531.5 481V484M538.5 481V484M545.5 481V484M552.5 481V484M559.5 481V484M565.5 481V484M572.5 476V484M579.5 481V484M586.5 481V484M593.5 481V484M600.5 481V484M607.5 481V484M614.5 481V484M621.5 481V484M628.5 481V484M635.5 481V484M642.5 481V484M649.5 481V484M656.5 481V484M663.5 481V484M669.5 481V484M676.5 476V484M683.5 481V484M690.5 481V484M697.5 481V484M704.5 481V484M711.5 481V484M718.5 481V484M725.5 481V484M732.5 481V484M739.5 481V484M746.5 481V484M753.5 481V484M760.5 481V484M767.5 481V484M773.5 481V484M780.5 476V484M787.5 481V484M794.5 481V484M801.5 481V484M808.5 481V484M815.5 481V484M822.5 481V484M829.5 481V484M836.5 481V484M843.5 481V484M850.5 481V484M857.5 481V484M864.5 481V484M871.5 481V484M877.5 481V484M884.5 476V484M891.5 481V484M898.5 481V484M905.5 481V484M912.5 481V484M919.5 481V484M926.5 481V484M933.5 481V484M940.5 481V484M947.5 481V484M954.5 481V484M961.5 481V484M968.5 481V484M975.5 481V484M981.5 481V484M988.5 476V484M995.5 481V484M1002.5 481V484M1009.5 481V484M1016.5 481V484M1023.5 481V484M1030.5 481V484M1037.5 481V484M1044.5 481V484M1051.5 481V484M1058.5 481V484M1065.5 481V484M1072.5 481V484M1079.5 481V484M1085.5 481V484M1092.5 476V484M1099.5 481V484M1106.5 481V484M1113.5 481V484M1120.5 481V484M1127.5 481V484M1134.5 481V484M1141.5 481V484M1148.5 481V484M1155.5 481V484M1162.5 481V484M1169.5 481V484M1176.5 481V484M1183.5 481V484M1189.5 481V484M1196.5 476V484M1203.5 481V484M1210.5 481V484M1217.5 481V484M1224.5 481V484M1231.5 481V484M1238.5 481V484M1245.5 481V484M1252.5 481V484" stroke="#000" stroke-width="1" fill="none"/></svg>
<div class="t" style="left:267px;top:470.6px;font-size:9px;line-height:10px;letter-spacing:0;-webkit-text-stroke:.3px #000">0:00:00</div>
<div class="t" style="left:366px;top:470.6px;font-size:9px;line-height:10px;letter-spacing:0;-webkit-text-stroke:.3px #000">00:00:30</div>
<div class="t" style="left:470px;top:470.6px;font-size:9px;line-height:10px;letter-spacing:0;-webkit-text-stroke:.3px #000">00:01:00</div>
<div class="t" style="left:574px;top:470.6px;font-size:9px;line-height:10px;letter-spacing:0;-webkit-text-stroke:.3px #000">00:01:30</div>
<div class="t" style="left:678px;top:470.6px;font-size:9px;line-height:10px;letter-spacing:0;-webkit-text-stroke:.3px #000">00:02:00</div>
<div class="t" style="left:782px;top:470.6px;font-size:9px;line-height:10px;letter-spacing:0;-webkit-text-stroke:.3px #000">00:02:30</div>
<div class="t" style="left:886px;top:470.6px;font-size:9px;line-height:10px;letter-spacing:0;-webkit-text-stroke:.3px #000">00:03:00</div>
<div class="t" style="left:990px;top:470.6px;font-size:9px;line-height:10px;letter-spacing:0;-webkit-text-stroke:.3px #000">00:03:30</div>
<div class="t" style="left:1094px;top:470.6px;font-size:9px;line-height:10px;letter-spacing:0;-webkit-text-stroke:.3px #000">00:04:00</div>
<div class="t" style="left:1198px;top:470.6px;font-size:9px;line-height:10px;letter-spacing:0;-webkit-text-stroke:.3px #000">00:04:30</div>
<svg style="left:261px;top:459px" width="8" height="7" viewBox="0 0 8 7"><path d="M0 7V1.500L1.500 0H8z" fill="#f4e800"/></svg>
<div style="left:260px;top:469px;width:6px;height:12px;background:linear-gradient(90deg,#e8ecf2,#aab4c2);border:1px solid #8c98a8;border-radius:1px"></div>
<svg style="left:260px;top:481px" width="6" height="4" viewBox="0 0 6 4"><path d="M0 0h6l-3 3.500z" fill="#b8c2d0" stroke="#8c98a8" stroke-width=".6"/></svg>
<div style="left:262px;top:472px;width:1px;height:6px;background:#6a7484"></div><div style="left:264px;top:472px;width:1px;height:6px;background:#6a7484"></div>
<div style="left:260px;top:484px;width:1px;height:443px;background:#000"></div>
<div style="left:261px;top:486px;width:855px;height:20px;background:#fff;border:1px solid #2a2a2a;border-left:none"></div>
<svg style="left:0;top:0" width="1280" height="1024" viewBox="0 0 1280 1024"><defs><radialGradient id="ff" cx="50%" cy="50%" r="60%"><stop offset="0" stop-color="#2e2e2e"/><stop offset=".6" stop-color="#101010"/><stop offset="1" stop-color="#000"/></radialGradient></defs>
<g fill="url(#ff)" shape-rendering="crispEdges"><rect x="263" y="489" width="19" height="14"/><rect x="284" y="489" width="19" height="14"/><rect x="306" y="489" width="19" height="14"/><rect x="327" y="489" width="19" height="14"/><rect x="348" y="489" width="19" height="14"/><rect x="370" y="489" width="19" height="14"/><rect x="391" y="489" width="19" height="14"/><rect x="412" y="489" width="19" height="14"/><rect x="433" y="489" width="19" height="14"/><rect x="455" y="489" width="19" height="14"/><rect x="476" y="489" width="19" height="14"/><rect x="497" y="489" width="19" height="14"/><rect x="519" y="489" width="19" height="14"/><rect x="540" y="489" width="19" height="14"/><rect x="561" y="489" width="19" height="14"/><rect x="583" y="489" width="19" height="14"/><rect x="604" y="489" width="19" height="14"/><rect x="625" y="489" width="19" height="14"/><rect x="647" y="489" width="19" height="14"/><rect x="668" y="489" width="19" height="14"/><rect x="689" y="489" width="19" height="14"/><rect x="711" y="489" width="19" height="14"/><rect x="732" y="489" width="19" height="14"/><rect x="753" y="489" width="19" height="14"/><rect x="774" y="489" width="19" height="14"/><rect x="796" y="489" width="19" height="14"/><rect x="817" y="489" width="19" height="14"/><rect x="838" y="489" width="19" height="14"/><rect x="860" y="489" width="19" height="14"/><rect x="881" y="489" width="19" height="14"/><rect x="902" y="489" width="19" height="14"/><rect x="924" y="489" width="19" height="14"/><rect x="945" y="489" width="19" height="14"/><rect x="966" y="489" width="19" height="14"/><rect x="988" y="489" width="19" height="14"/><rect x="1009" y="489" width="19" height="14"/><rect x="1030" y="489" width="19" height="14"/><rect x="1051" y="489" width="19" height="14"/><rect x="1073" y="489" width="19" height="14"/><rect x="1094" y="489" width="19" height="14"/></g>
<path d="M1108 486h8v8z" fill="#e0dfe3"/><path d="M1107.500 486.500l8 8" stroke="#2a2a2a" fill="none"/><path d="M261 486v6l6-6z" fill="#e0dfe3"/><path d="M261.500 492l6-5.500" stroke="#2a2a2a" fill="none"/>
</svg>
<svg style="left:261px;top:510px" width="12" height="60" viewBox="0 0 12 60"><rect width="12" height="60" fill="#fff"/><rect width="12" height="60" fill="#000" filter="url(#nBlob)"/><path d="M0 36.500H10" stroke="#333" stroke-width="1"/><rect x=".75" y=".75" width="10.500" height="58.500" fill="none" stroke="#4a4a4a" stroke-width="1.500"/><path d="M10 0V60" stroke="#4a4a4a" stroke-width="1.500"/></svg>
<svg style="left:275px;top:510px" width="8" height="60" viewBox="0 0 8 60"><rect width="8" height="60" fill="#fff"/><rect width="8" height="60" fill="#000" filter="url(#nBk2)"/><rect width="8" height="60" fill="#000" filter="url(#nBlob)"/><path d="M0 17.500H8M0 51.500H8" stroke="#333" stroke-width="1"/><path d="M4 0V60" stroke="#444" stroke-width="1.400"/><rect x=".75" y=".75" width="6.500" height="58.500" fill="none" stroke="#4a4a4a" stroke-width="1.500"/><rect x="1" y="54" width="6" height="4" fill="#222"/></svg>
<svg style="left:266px;top:574px" width="150" height="60" viewBox="0 0 150 60" shape-rendering="crispEdges"><rect width="150" height="60" fill="#fff"/><rect x="0" y="0" width="47" height="60" fill="#000" filter="url(#nBlob)" opacity=".85"/><rect x="16" y="0" width="31" height="60" fill="#000" filter="url(#nBk2)"/><rect x="16" y="20" width="31" height="38" fill="#000" filter="url(#nW2)" opacity=".7"/><rect x="56" y="0" width="17" height="60" fill="#555" filter="url(#nBk)"/><rect x="73" y="5" width="25" height="12" fill="#000" filter="url(#nBk)"/><rect x="73" y="8" width="25" height="6" fill="#000"/><rect x="73" y="18" width="25" height="2" fill="#000" filter="url(#nBk)"/><rect x="73" y="38" width="25" height="1" fill="#333"/><rect x="73" y="54" width="25" height="3" fill="#000" filter="url(#nBk)"/><rect x="98" y="2" width="28" height="56" fill="#1c1c1c"/><rect x="98" y="2" width="28" height="56" fill="#fff" filter="url(#nW)" opacity=".95"/><rect x="112" y="14" width="14" height="30" fill="#fff" filter="url(#nW2)" opacity=".9"/><rect x="140" y="0" width="10" height="60" fill="#000" filter="url(#nBk2)"/><path d="M5.5 0V60M16.5 0V60M21.5 0V60M23.5 0V60M26.5 0V60M28.5 0V60M31.5 0V60M33.5 0V60M37.5 0V60M42.5 0V60M47.5 0V60M56.5 0V60M63.5 0V60M67.5 0V60M73.5 0V60M78.5 0V60M83.5 0V60M88.5 0V60M93.5 0V60M98.5 0V60M103.5 0V60M108.5 0V60M112.5 0V60M117.5 0V60M120.5 0V60M123.5 0V60M126.5 0V60M142.5 0V60M144.5 0V60M147.5 0V60" stroke="#404040" stroke-width="1.400" fill="none" shape-rendering="geometricPrecision"/><rect x="129" y="3" width="9" height="54" fill="#0a0a0a"/><rect x="138" y="4" width="2" height="50" fill="#1a1ae0"/><rect x=".75" y=".75" width="148.5" height="58.5" fill="none" stroke="#4a4a4a" stroke-width="1.500" shape-rendering="geometricPrecision"/></svg>
<div style="left:318px;top:638px;width:7px;height:20px;background:#fff;border:1px solid #3a3a3a"></div><div style="left:320px;top:644px;width:2px;height:8px;background:#888"></div>
<div style="left:312px;top:662px;width:13px;height:20px;background:#fff;border:1px solid #3a3a3a;border-width:1px 1px 1px 1px"></div>
<svg style="left:315px;top:677px" width="6" height="4" viewBox="0 0 6 4"><path d="M0 0h6l-3 3.500z" fill="#000"/></svg>
<div style="left:261px;top:686px;width:524px;height:59px;background:#fff;border:1px solid #2a2a2a;border-left:none"></div>
<svg style="left:0;top:0" width="1280" height="1024" viewBox="0 0 1280 1024" shape-rendering="crispEdges"><path d="M262.5 690.6V710.2M263.5 699.4V701.7M264.5 699.6V701.5M265.5 699.7V701.3M266.5 699.6V701.5M267.5 692.5V708.8M268.5 699.3V701.5M269.5 699.3V701.8M270.5 699.4V701.7M271.5 699.8V701.3M272.5 691.4V710.9M273.5 699.4V701.7M274.5 699.3V701.5M275.5 699.4V701.5M276.5 699.3V701.6M277.5 690.7V710.0M278.5 699.4V701.7M279.5 699.3V701.7M280.5 699.5V701.7M281.5 694.8V706.2M282.5 690.9V709.3M283.5 695.5V704.8M284.5 695.7V704.8M285.5 697.3V703.4M286.5 696.9V704.1M287.5 691.1V709.3M288.5 697.8V703.4M289.5 696.8V704.3M290.5 696.5V704.8M291.5 696.9V703.9M292.5 691.1V711.2M293.5 697.3V703.8M294.5 698.2V702.8M295.5 697.8V703.2M296.5 697.4V703.7M297.5 691.6V709.0M298.5 698.2V702.8M299.5 699.7V701.4M300.5 699.4V701.5M301.5 699.6V701.3M302.5 691.7V709.3M303.5 697.4V703.6M304.5 697.6V703.3M305.5 698.3V702.9M306.5 697.3V703.7M307.5 690.6V711.0M308.5 698.0V702.5M309.5 697.9V703.4M310.5 698.3V702.3M311.5 697.7V703.2M312.5 691.5V709.1M313.5 698.5V702.4M314.5 698.6V702.4M315.5 698.8V702.2M316.5 699.0V702.2M317.5 692.0V709.1M318.5 698.4V702.3M319.5 699.2V701.7M320.5 699.7V701.3M321.5 699.5V701.6M322.5 691.6V709.1M323.5 697.7V703.2M324.5 697.4V703.1M325.5 696.8V703.7M326.5 696.9V704.2M327.5 689.7V710.4M328.5 698.7V702.5M329.5 698.1V703.2M330.5 698.6V702.4M331.5 698.6V702.7M332.5 691.7V710.3M333.5 697.6V703.3M334.5 698.8V702.1M335.5 698.2V702.9M336.5 698.3V702.7M337.5 689.4V712.1M338.5 699.1V702.0M339.5 698.5V702.6M340.5 699.5V701.6M341.5 699.7V701.4M342.5 691.2V711.6M343.5 697.1V704.0M344.5 697.5V703.7M345.5 697.7V703.3M346.5 697.3V703.7M347.5 692.2V709.8M348.5 696.5V704.3M349.5 697.3V703.3M350.5 697.3V703.9M351.5 697.8V703.1M352.5 691.1V709.1M353.5 697.3V704.0M354.5 696.7V704.0M355.5 697.2V704.0M356.5 697.5V703.2M357.5 690.8V709.9M358.5 698.0V702.9M359.5 698.4V702.5M360.5 698.6V702.4M361.5 697.9V703.1M362.5 690.0V711.8M363.5 698.3V702.8M364.5 699.3V701.7M365.5 692.4V709.6M366.5 689.6V711.4M367.5 693.4V706.8M368.5 692.3V708.0M369.5 694.8V706.6M370.5 695.3V705.0M371.5 695.5V705.5M372.5 694.2V707.1M373.5 694.2V705.9M374.5 694.4V706.6M375.5 694.0V705.9M376.5 695.2V705.4M377.5 696.0V704.9M378.5 694.9V706.6M379.5 692.6V708.0M380.5 695.2V706.0M381.5 696.6V704.1M382.5 696.3V704.9M383.5 696.3V704.7M384.5 697.0V703.5M385.5 692.7V708.3M386.5 691.4V708.9M387.5 693.4V708.0M388.5 692.3V707.8M389.5 694.1V706.2M390.5 694.6V706.5M391.5 693.7V707.3M392.5 692.6V707.8M393.5 696.0V704.9M394.5 696.0V705.6M395.5 694.4V706.5M396.5 693.7V707.2M397.5 693.5V707.4M398.5 694.2V706.6M399.5 695.7V705.7M400.5 695.0V706.2M401.5 696.2V704.8M402.5 697.0V704.1M403.5 696.7V704.0M404.5 694.7V705.6M405.5 696.2V704.6M406.5 695.9V705.0M407.5 694.0V707.0M408.5 691.1V708.7M409.5 694.6V706.5M410.5 693.3V708.2M411.5 691.2V709.5M412.5 694.6V706.5M413.5 695.0V706.2M414.5 695.0V706.9M415.5 689.5V711.1M416.5 691.6V710.4M417.5 694.6V705.7M418.5 693.8V707.3M419.5 696.3V705.4M420.5 692.4V707.5M421.5 695.2V705.8M422.5 695.2V705.4M423.5 694.9V706.4M424.5 697.0V704.3M425.5 696.4V704.8M426.5 697.6V703.8M427.5 696.8V704.7M428.5 694.5V706.3M429.5 692.8V708.4M430.5 691.9V709.2M431.5 694.3V707.1M432.5 695.5V705.6M433.5 692.7V708.2M434.5 690.0V710.4M435.5 695.1V705.8M436.5 694.2V706.8M437.5 693.9V707.2M438.5 694.7V705.5M439.5 696.2V705.3M440.5 696.1V705.5M441.5 695.6V705.1M442.5 696.9V704.7M443.5 696.6V704.3M444.5 695.6V704.9M445.5 696.0V704.7M446.5 695.0V705.8M447.5 696.7V704.5M448.5 696.2V704.3M449.5 694.6V706.4M450.5 692.5V708.0M451.5 694.6V706.6M452.5 690.7V710.2M453.5 694.9V706.0M454.5 694.0V707.0M455.5 693.9V708.1M456.5 695.5V705.3M457.5 695.1V706.3M458.5 690.3V711.6M459.5 695.6V705.2M460.5 695.9V705.2M461.5 694.3V707.4M462.5 695.1V705.1M463.5 696.7V704.2M464.5 696.1V704.7M465.5 695.5V704.9M466.5 695.7V705.4M467.5 696.1V704.7M468.5 696.9V704.2M469.5 696.0V704.5M470.5 694.3V706.7M471.5 694.4V706.5M472.5 692.2V708.4M473.5 693.2V709.2M474.5 694.0V707.3M475.5 693.7V707.6M476.5 693.6V706.6M477.5 694.5V706.2M478.5 694.8V706.3M479.5 695.3V705.7M480.5 694.0V706.8M481.5 695.3V706.0M482.5 694.8V705.9M483.5 694.3V706.2M484.5 694.3V706.7M485.5 695.4V704.9M486.5 696.5V704.5M487.5 696.2V704.6M488.5 696.3V704.8M489.5 696.6V704.0M490.5 696.4V704.1M491.5 694.3V706.2M492.5 695.1V706.6M493.5 692.3V708.7M494.5 695.1V705.7M495.5 694.5V706.1M496.5 692.7V708.7M497.5 694.4V706.1M498.5 695.1V706.2M499.5 693.0V708.1M500.5 695.2V705.5M501.5 694.9V705.6M502.5 695.7V704.8M503.5 696.5V704.6M504.5 694.3V706.8M505.5 696.6V704.7M506.5 697.1V704.3M507.5 696.1V704.5M508.5 696.1V704.1M509.5 695.8V705.5M510.5 693.1V707.9M511.5 696.3V704.3M512.5 694.2V707.4M513.5 695.3V706.0M514.5 695.1V706.3M515.5 694.7V706.7M516.5 695.2V706.2M517.5 695.2V705.5M518.5 694.5V705.7M519.5 693.2V706.9M520.5 689.3V709.9M521.5 695.6V706.0M522.5 695.7V704.8M523.5 694.4V706.2M524.5 695.4V705.4M525.5 695.8V705.0M526.5 696.2V705.2M527.5 695.4V705.8M528.5 695.5V705.5M529.5 695.6V705.6M530.5 695.7V705.1M531.5 694.8V705.8M532.5 687.1V713.9M533.5 693.8V706.8M534.5 691.9V708.7M535.5 693.1V707.9M536.5 693.0V707.8M537.5 693.2V707.8M538.5 694.1V707.0M539.5 695.1V706.6M540.5 693.9V707.3M541.5 693.5V707.7M542.5 694.6V707.0M543.5 694.3V705.9M544.5 693.9V708.2M545.5 695.6V706.2M546.5 694.2V706.9M547.5 696.0V705.1M548.5 694.6V706.7M549.5 693.8V707.9M550.5 694.2V707.0M551.5 696.0V704.9M552.5 691.5V708.9M553.5 695.4V705.0M554.5 697.1V704.1M555.5 694.5V706.7M556.5 695.5V704.8M557.5 692.8V708.1M558.5 693.7V707.1M559.5 692.8V708.3M560.5 694.6V706.6M561.5 693.9V707.7M562.5 692.1V708.4M563.5 691.3V709.4M564.5 692.2V709.6M565.5 694.8V706.0M566.5 688.5V712.4M567.5 692.3V708.4M568.5 692.4V708.1M569.5 688.9V711.3M570.5 692.4V707.5M571.5 694.9V706.2M572.5 694.7V706.0M573.5 693.5V707.9M574.5 694.3V706.9M575.5 696.2V704.8M576.5 696.1V704.5M577.5 693.1V706.9M578.5 695.8V705.4M579.5 694.2V706.8M580.5 694.9V706.1M581.5 695.6V705.8M582.5 695.1V706.6M583.5 693.4V707.4M584.5 691.3V708.8M585.5 691.2V709.3M586.5 692.5V708.3M587.5 693.0V708.6M588.5 694.1V707.5M589.5 693.9V708.0M590.5 694.3V707.2M591.5 692.0V709.0M592.5 694.6V706.7M593.5 694.9V706.6M594.5 694.0V706.7M595.5 695.2V706.0M596.5 689.7V711.2M597.5 693.1V708.4M598.5 692.7V708.2M599.5 692.6V709.2M600.5 693.2V707.2M601.5 693.6V708.2M602.5 693.1V707.6M603.5 693.7V707.3M604.5 694.0V707.4M605.5 693.4V707.9M606.5 694.8V706.6M607.5 694.7V706.5M608.5 693.8V707.2M609.5 692.2V707.8M610.5 693.8V707.0M611.5 692.5V708.9M612.5 691.9V709.7M613.5 690.3V709.8M614.5 691.6V708.8M615.5 694.1V707.3M616.5 694.4V706.9M617.5 689.7V711.5M618.5 692.9V708.0M619.5 692.0V708.3M620.5 691.6V710.5M621.5 694.8V706.8M622.5 692.1V708.5M623.5 693.8V706.7M624.5 693.2V706.8M625.5 695.6V705.4M626.5 695.3V706.0M627.5 689.3V710.6M628.5 693.4V707.2M629.5 695.5V705.9M630.5 695.8V705.7M631.5 695.3V706.4M632.5 690.2V711.1M633.5 694.6V705.8M634.5 693.2V708.2M635.5 691.0V709.8M636.5 690.2V709.2M637.5 689.0V711.4M638.5 690.3V710.4M639.5 691.1V709.9M640.5 690.0V709.7M641.5 691.7V709.5M642.5 691.4V710.1M643.5 689.8V709.6M644.5 692.1V709.5M645.5 691.7V708.3M646.5 694.5V707.5M647.5 694.3V705.9M648.5 693.3V708.1M649.5 691.3V710.8M650.5 692.5V709.0M651.5 693.0V708.2M652.5 691.8V709.3M653.5 691.9V708.9M654.5 692.2V708.6M655.5 694.2V707.4M656.5 692.9V707.9M657.5 693.9V706.9M658.5 694.3V706.2M659.5 695.5V704.9M660.5 694.2V707.2M661.5 692.7V708.5M662.5 688.2V711.6M663.5 691.2V711.2M664.5 693.0V708.4M665.5 691.7V708.4M666.5 689.2V711.2M667.5 693.9V708.2M668.5 690.5V709.9M669.5 693.5V707.1M670.5 693.5V707.3M671.5 692.5V708.8M672.5 692.6V707.2M673.5 693.7V708.3M674.5 692.7V709.2M675.5 692.4V708.9M676.5 692.5V707.5M677.5 694.7V706.6M678.5 691.2V709.4M679.5 694.0V706.8M680.5 692.9V708.3M681.5 690.0V711.6M682.5 692.9V708.8M683.5 693.9V706.9M684.5 693.0V708.1M685.5 695.3V706.1M686.5 695.8V705.3M687.5 690.2V709.7M688.5 689.0V712.4M689.5 689.4V713.0M690.5 693.9V707.4M691.5 691.5V709.3M692.5 690.4V709.6M693.5 692.4V709.1M694.5 690.9V710.3M695.5 692.7V709.0M696.5 694.1V707.6M697.5 693.4V707.7M698.5 693.7V707.5M699.5 691.4V709.8M700.5 690.9V709.6M701.5 695.0V705.7M702.5 695.4V705.6M703.5 690.6V710.9M704.5 696.1V704.4M705.5 696.7V703.9M706.5 697.0V703.7M707.5 697.4V704.1M708.5 691.8V710.0M709.5 696.5V704.1M710.5 696.0V705.1M711.5 697.2V703.4M712.5 697.6V703.1M713.5 691.5V709.5M714.5 696.6V705.0M715.5 697.5V704.1M716.5 696.9V703.8M717.5 697.1V704.2M718.5 690.6V709.7M719.5 697.8V702.9M720.5 698.2V702.8M721.5 697.4V703.7M722.5 697.3V703.7M723.5 690.5V709.8M724.5 697.5V703.4M725.5 698.0V702.8M726.5 698.3V702.7M727.5 698.2V702.9M728.5 689.7V711.3M729.5 698.3V702.8M730.5 698.7V702.2M731.5 698.1V703.0M732.5 698.1V702.7M733.5 693.2V708.1M734.5 698.6V702.5M735.5 697.0V704.0M736.5 694.8V705.9M737.5 695.3V705.0M738.5 691.5V709.8M739.5 697.1V703.9M740.5 695.5V706.3M741.5 696.5V705.1M742.5 697.1V704.4M743.5 688.7V712.1M744.5 697.5V703.8M745.5 696.4V704.6M746.5 695.6V704.9M747.5 695.9V705.4M748.5 689.1V712.3M749.5 697.1V704.0M750.5 697.5V703.0M751.5 697.6V703.8M752.5 697.7V703.2M753.5 688.9V711.8M754.5 697.9V702.8M755.5 698.4V702.5M756.5 698.3V702.7M757.5 698.2V702.7M758.5 691.4V711.0M759.5 698.4V702.6M760.5 698.2V702.5M761.5 698.5V702.8M762.5 698.1V703.0M763.5 690.7V710.9M764.5 697.8V703.2M765.5 698.9V702.2M766.5 698.5V702.7M767.5 698.2V702.7M768.5 690.3V711.1M769.5 699.0V702.2M770.5 699.1V701.7M771.5 699.0V701.8M772.5 699.4V701.6M773.5 698.6V702.4M774.5 699.9V701.1M775.5 699.8V701.1M776.5 699.7V701.2M777.5 699.8V701.2M778.5 699.9V701.2M779.5 699.9V701.0M780.5 700.0V701.0M781.5 699.9V701.1M782.5 700.0V701.0" stroke="#7b3040" stroke-width="1" fill="none"/><path d="M262.5 721.1V739.8M263.5 729.5V731.4M264.5 729.7V731.4M265.5 729.6V731.3M266.5 729.7V731.4M267.5 721.4V740.2M268.5 729.6V731.4M269.5 729.7V731.5M270.5 729.4V731.7M271.5 729.6V731.4M272.5 721.5V740.4M273.5 729.5V731.4M274.5 729.5V731.6M275.5 729.8V731.3M276.5 729.8V731.3M277.5 721.1V739.5M278.5 729.4V731.5M279.5 729.3V731.7M280.5 729.8V731.2M281.5 726.0V735.0M282.5 721.8V739.3M283.5 725.3V735.1M284.5 726.8V734.1M285.5 725.8V735.7M286.5 727.0V733.9M287.5 722.2V739.0M288.5 727.4V733.7M289.5 726.8V734.9M290.5 727.7V733.2M291.5 726.1V734.4M292.5 719.8V739.5M293.5 727.1V733.7M294.5 727.3V733.3M295.5 728.0V733.0M296.5 727.9V733.4M297.5 719.7V740.3M298.5 728.8V732.2M299.5 729.7V731.3M300.5 729.6V731.5M301.5 729.4V731.6M302.5 721.6V740.2M303.5 727.6V733.5M304.5 727.9V733.1M305.5 728.1V732.9M306.5 726.8V734.0M307.5 721.3V740.1M308.5 727.5V733.8M309.5 727.7V733.6M310.5 728.2V733.0M311.5 728.4V732.6M312.5 720.9V740.9M313.5 727.8V733.1M314.5 728.4V732.3M315.5 728.3V732.7M316.5 728.9V732.3M317.5 722.3V738.6M318.5 728.5V732.5M319.5 728.5V732.3M320.5 729.7V731.4M321.5 729.3V731.6M322.5 720.1V742.2M323.5 726.7V734.2M324.5 728.2V732.7M325.5 727.3V733.9M326.5 727.2V733.4M327.5 722.7V738.7M328.5 727.3V733.6M329.5 727.7V733.4M330.5 728.3V732.7M331.5 727.6V733.1M332.5 720.9V739.4M333.5 728.7V732.3M334.5 728.3V732.7M335.5 728.1V732.7M336.5 728.4V732.7M337.5 720.6V741.4M338.5 728.5V732.5M339.5 728.8V732.2M340.5 729.3V731.6M341.5 729.7V731.2M342.5 720.7V738.8M343.5 726.2V734.9M344.5 727.8V733.6M345.5 725.8V734.6M346.5 726.3V734.7M347.5 719.1V741.8M348.5 727.5V733.7M349.5 727.1V734.2M350.5 727.1V733.4M351.5 727.1V733.4M352.5 721.4V739.6M353.5 727.8V732.8M354.5 728.1V732.7M355.5 728.1V732.6M356.5 727.5V733.3M357.5 720.7V740.1M358.5 727.4V733.6M359.5 727.8V733.5M360.5 727.7V733.4M361.5 728.6V732.3M362.5 721.4V739.3M363.5 728.4V732.7M364.5 729.2V731.7M365.5 722.2V739.5M366.5 722.0V739.6M367.5 724.0V737.3M368.5 721.3V738.4M369.5 724.7V736.7M370.5 724.0V736.1M371.5 723.0V738.9M372.5 724.1V736.6M373.5 722.7V738.7M374.5 724.0V737.0M375.5 724.9V735.3M376.5 725.0V736.0M377.5 724.6V735.6M378.5 725.5V735.7M379.5 720.7V740.2M380.5 724.0V736.6M381.5 725.0V736.8M382.5 723.8V736.5M383.5 726.2V734.3M384.5 724.2V736.5M385.5 726.7V734.6M386.5 721.9V740.2M387.5 723.4V737.9M388.5 724.6V736.8M389.5 722.8V736.9M390.5 722.4V738.6M391.5 724.7V737.3M392.5 723.0V737.8M393.5 721.9V738.0M394.5 725.0V736.0M395.5 723.8V737.4M396.5 722.4V737.2M397.5 724.9V736.2M398.5 725.0V735.2M399.5 725.0V736.3M400.5 724.3V737.1M401.5 726.3V735.3M402.5 725.4V735.6M403.5 724.8V736.4M404.5 726.8V734.6M405.5 726.7V734.6M406.5 725.8V735.3M407.5 722.1V738.1M408.5 721.4V740.7M409.5 721.7V738.5M410.5 722.3V740.1M411.5 719.8V741.5M412.5 722.0V738.9M413.5 725.0V736.4M414.5 723.4V737.3M415.5 722.3V738.3M416.5 724.2V737.0M417.5 723.3V738.2M418.5 724.8V736.6M419.5 723.6V738.7M420.5 724.5V736.9M421.5 725.5V736.0M422.5 724.5V736.6M423.5 725.7V735.3M424.5 724.6V736.1M425.5 724.0V736.6M426.5 725.1V735.9M427.5 724.4V736.5M428.5 723.2V737.4M429.5 717.4V743.4M430.5 724.6V737.1M431.5 722.5V738.8M432.5 722.7V737.4M433.5 724.6V736.8M434.5 722.4V737.7M435.5 722.6V738.5M436.5 723.6V737.1M437.5 724.7V736.0M438.5 722.8V737.1M439.5 724.9V736.2M440.5 723.4V737.5M441.5 723.2V736.8M442.5 722.7V737.6M443.5 723.6V736.4M444.5 726.2V734.7M445.5 723.9V737.3M446.5 726.6V734.3M447.5 725.6V735.7M448.5 723.0V738.0M449.5 722.5V739.2M450.5 723.3V738.9M451.5 723.8V737.4M452.5 721.8V740.3M453.5 724.1V736.4M454.5 721.5V740.1M455.5 724.9V736.6M456.5 723.9V737.3M457.5 722.1V738.4M458.5 724.8V735.9M459.5 722.6V738.2M460.5 723.6V737.7M461.5 722.8V738.8M462.5 723.8V737.5M463.5 725.5V735.5M464.5 724.7V735.8M465.5 725.1V735.3M466.5 725.7V735.2M467.5 725.5V735.4M468.5 724.3V735.8M469.5 726.6V734.3M470.5 719.6V739.9M471.5 722.6V739.0M472.5 720.6V738.8M473.5 722.7V738.8M474.5 721.4V740.0M475.5 722.7V738.6M476.5 723.5V738.7M477.5 723.1V737.8M478.5 724.6V736.6M479.5 724.3V737.1M480.5 724.7V737.0M481.5 724.0V737.0M482.5 724.2V737.2M483.5 724.9V736.8M484.5 721.5V740.3M485.5 723.9V737.2M486.5 726.2V734.6M487.5 725.5V735.1M488.5 723.9V737.0M489.5 724.6V736.3M490.5 724.6V735.8M491.5 724.6V736.8M492.5 723.7V738.0M493.5 720.9V739.5M494.5 725.2V736.2M495.5 725.1V736.0M496.5 723.0V737.7M497.5 721.9V738.7M498.5 723.2V738.6M499.5 723.6V738.3M500.5 724.9V736.1M501.5 722.6V737.3M502.5 722.2V738.9M503.5 722.7V737.0M504.5 726.1V735.5M505.5 725.3V736.2M506.5 724.6V736.5M507.5 724.0V736.4M508.5 724.3V737.1M509.5 725.2V735.9M510.5 724.7V737.0M511.5 725.2V735.8M512.5 721.6V740.7M513.5 724.5V736.7M514.5 723.5V737.7M515.5 723.1V738.6M516.5 723.8V737.7M517.5 718.2V741.2M518.5 722.8V738.3M519.5 724.6V737.0M520.5 724.4V736.9M521.5 723.2V737.6M522.5 724.2V736.9M523.5 723.0V738.8M524.5 723.5V737.9M525.5 725.0V736.2M526.5 724.1V737.5M527.5 726.4V735.1M528.5 725.5V735.3M529.5 724.9V735.9M530.5 725.0V736.7M531.5 721.5V740.2M532.5 721.0V738.9M533.5 724.1V736.4M534.5 724.9V736.4M535.5 722.0V738.9M536.5 721.2V739.1M537.5 723.1V738.0M538.5 723.4V738.0M539.5 723.1V738.2M540.5 723.5V737.5M541.5 722.0V738.7M542.5 723.2V737.3M543.5 722.7V738.5M544.5 725.5V735.8M545.5 725.3V735.8M546.5 723.2V736.7M547.5 724.9V735.7M548.5 723.5V737.7M549.5 722.2V738.9M550.5 723.2V737.3M551.5 724.1V736.7M552.5 724.0V736.8M553.5 724.8V736.7M554.5 725.2V735.7M555.5 722.5V739.0M556.5 725.5V735.9M557.5 722.9V738.5M558.5 723.5V737.9M559.5 722.2V739.0M560.5 718.9V742.1M561.5 716.0V744.7M562.5 721.3V740.6M563.5 722.7V739.9M564.5 721.9V738.6M565.5 724.2V738.0M566.5 721.4V739.2M567.5 722.6V739.2M568.5 722.1V738.5M569.5 724.2V736.1M570.5 719.7V739.9M571.5 725.0V736.8M572.5 718.7V741.0M573.5 724.6V735.8M574.5 724.2V737.1M575.5 723.4V738.2M576.5 725.1V736.8M577.5 722.8V738.4M578.5 725.1V736.5M579.5 724.7V736.8M580.5 723.6V738.4M581.5 722.7V738.5M582.5 723.5V737.4M583.5 723.0V737.8M584.5 724.3V737.6M585.5 721.7V738.5M586.5 720.0V740.5M587.5 723.0V737.9M588.5 723.4V737.9M589.5 723.2V738.1M590.5 723.0V738.4M591.5 717.5V743.7M592.5 720.6V739.7M593.5 721.4V739.0M594.5 723.1V738.4M595.5 724.4V736.8M596.5 724.4V735.8M597.5 722.4V738.2M598.5 724.4V736.6M599.5 721.8V738.6M600.5 725.0V736.0M601.5 721.9V739.6M602.5 724.8V736.6M603.5 725.0V735.7M604.5 724.9V736.9M605.5 722.2V738.1M606.5 724.7V735.5M607.5 725.3V735.8M608.5 724.7V736.5M609.5 721.4V739.2M610.5 720.4V740.6M611.5 719.5V741.7M612.5 723.4V737.4M613.5 720.3V739.8M614.5 721.1V740.6M615.5 718.3V743.3M616.5 721.5V740.0M617.5 723.0V738.7M618.5 719.5V742.2M619.5 720.0V740.3M620.5 722.2V737.9M621.5 721.4V738.9M622.5 723.6V737.1M623.5 724.6V736.5M624.5 723.3V737.9M625.5 724.0V736.8M626.5 721.7V738.0M627.5 722.6V739.5M628.5 725.1V735.9M629.5 720.9V740.0M630.5 724.0V737.2M631.5 724.0V737.0M632.5 723.3V737.8M633.5 724.3V736.6M634.5 723.8V738.1M635.5 720.2V742.5M636.5 721.4V738.8M637.5 718.4V743.4M638.5 722.7V738.1M639.5 719.7V741.8M640.5 721.2V739.8M641.5 723.1V737.6M642.5 722.2V737.5M643.5 720.0V741.8M644.5 720.2V740.7M645.5 719.7V742.0M646.5 721.8V738.5M647.5 721.1V741.4M648.5 723.2V737.6M649.5 720.7V740.4M650.5 723.2V737.2M651.5 721.0V739.7M652.5 722.2V739.1M653.5 722.2V740.4M654.5 724.5V737.4M655.5 722.6V738.6M656.5 724.8V736.3M657.5 722.6V739.2M658.5 722.2V737.7M659.5 723.3V738.4M660.5 724.1V737.7M661.5 715.7V743.3M662.5 722.2V738.1M663.5 721.1V738.7M664.5 718.8V741.6M665.5 721.4V739.9M666.5 719.7V739.7M667.5 719.8V741.6M668.5 723.1V738.3M669.5 720.4V739.2M670.5 718.7V741.5M671.5 723.7V737.6M672.5 721.1V740.0M673.5 723.1V737.5M674.5 721.3V740.5M675.5 720.6V739.0M676.5 722.8V739.0M677.5 722.3V738.8M678.5 723.0V737.8M679.5 725.2V736.1M680.5 724.5V736.6M681.5 717.2V743.9M682.5 721.5V739.6M683.5 722.6V739.1M684.5 720.2V739.9M685.5 722.4V739.2M686.5 722.3V739.0M687.5 721.6V738.6M688.5 716.9V744.1M689.5 718.3V741.9M690.5 720.6V740.3M691.5 719.6V740.2M692.5 722.9V739.0M693.5 718.8V740.6M694.5 722.2V739.6M695.5 720.2V739.5M696.5 723.0V737.8M697.5 721.9V740.7M698.5 721.3V740.6M699.5 720.5V741.2M700.5 719.2V743.8M701.5 725.6V735.5M702.5 726.6V735.0M703.5 721.9V739.0M704.5 725.7V735.0M705.5 726.3V734.8M706.5 727.1V734.2M707.5 726.8V734.4M708.5 719.8V740.8M709.5 726.8V734.3M710.5 725.7V734.9M711.5 727.5V733.5M712.5 726.5V734.7M713.5 720.1V740.1M714.5 727.5V733.3M715.5 727.6V733.4M716.5 727.7V733.3M717.5 727.7V733.6M718.5 721.6V738.8M719.5 726.9V733.8M720.5 727.5V733.3M721.5 727.7V733.5M722.5 727.9V732.8M723.5 719.8V740.3M724.5 727.8V733.5M725.5 728.6V732.6M726.5 728.8V732.5M727.5 727.9V732.9M728.5 719.6V739.8M729.5 728.8V732.6M730.5 728.9V732.0M731.5 728.8V732.3M732.5 728.7V732.6M733.5 723.0V738.8M734.5 728.5V732.7M735.5 725.0V735.7M736.5 724.1V736.5M737.5 726.0V734.9M738.5 720.9V741.1M739.5 725.9V735.0M740.5 725.0V735.6M741.5 726.3V735.0M742.5 726.7V733.8M743.5 720.4V740.2M744.5 727.2V733.9M745.5 726.7V734.4M746.5 727.5V733.7M747.5 726.5V734.6M748.5 721.1V741.2M749.5 727.1V734.3M750.5 726.9V733.9M751.5 726.8V734.1M752.5 728.4V732.8M753.5 720.1V739.4M754.5 727.9V733.3M755.5 728.0V733.4M756.5 728.4V732.9M757.5 728.5V732.8M758.5 720.5V740.4M759.5 727.5V733.4M760.5 728.6V732.2M761.5 728.4V732.8M762.5 728.8V732.4M763.5 721.1V741.4M764.5 728.2V732.5M765.5 728.2V732.5M766.5 728.2V732.5M767.5 728.3V732.5M768.5 720.6V739.5M769.5 729.2V731.8M770.5 728.9V732.0M771.5 729.4V731.7M772.5 729.6V731.4M773.5 728.2V732.8M774.5 730.0V731.0M775.5 729.7V731.3M776.5 729.8V731.3M777.5 730.0V731.1M778.5 729.8V731.3M779.5 729.8V731.2M780.5 729.9V731.1M781.5 730.0V731.1M782.5 730.0V731.1" stroke="#7b3040" stroke-width="1" fill="none"/><path d="M261 715.500H785" stroke="#1a1a1a" stroke-width="1"/><path d="M531 687V745" stroke="#3c3c3c" stroke-width="2"/><path d="M702 687V745" stroke="#3c3c3c" stroke-width="2"/></svg>
<svg style="left:0;top:0" width="1280" height="1024" viewBox="0 0 1280 1024"><path d="M262 686h6l-6 6z" fill="#1e2ee6"/><path d="M261 692l6-6" stroke="#2a2a2a"/><path d="M262 739l6 6h-6z" fill="#fff" stroke="#2a2a2a" stroke-width=".8"/><path d="M530 686h6l-6 6z" fill="#19e4f0"/><path d="M531 692l6-6" stroke="#3a3a3a" fill="none"/><path d="M701 686h6l-6 6z" fill="#19e4f0"/><path d="M702 692l6-6" stroke="#3a3a3a" fill="none"/><path d="M531 739l5 6h-5z" fill="#fff" stroke="#2a2a2a" stroke-width=".8"/><path d="M702 739l5 6h-5z" fill="#fff" stroke="#2a2a2a" stroke-width=".8"/><path d="M779 686h6v6z" fill="#e0dfe3"/><path d="M779.500 686.500l5 5.500" stroke="#2a2a2a" fill="none"/><path d="M779.500 686h5.500v5.500z" fill="#19e4f0"/><path d="M784.500 691V745" stroke="#3c3c3c" stroke-width="2"/></svg>
<svg style="left:0;top:0" width="1280" height="1024" viewBox="0 0 1280 1024" shape-rendering="crispEdges"><path d="M364.5 484V747M468.5 484V747M572.5 484V747M676.5 484V747M780.5 484V747M884.5 484V747M988.5 484V747M1092.5 484V747M1196.5 484V747" stroke="#222" stroke-width="1" stroke-dasharray="1 3" fill="none"/><path d="M364.5 748V927M468.5 748V927M572.5 748V927M676.5 748V927M780.5 748V927M884.5 748V927M988.5 748V927M1092.5 748V927M1196.5 748V927" stroke="#5a5a1e" stroke-width="1" stroke-dasharray="1 3" fill="none"/></svg>
</div>
<!-- 60_tracks.html -->
<svg width="0" height="0" style="left:0;top:0"><defs>
<symbol id="i-comp" viewBox="0 0 15 15"><rect x="6.500" y="1.500" width="7" height="7" fill="#fdfdfd" stroke="#8c8c94"/><rect x="3.500" y="4.500" width="7" height="7" fill="#e8e8ec" stroke="#7c7c84"/><rect x=".600" y="7.600" width="6" height="6" fill="#a6dcae" stroke="#8a8ae8" stroke-width="1.100"/><path d="M.500 .500l13.500 14" stroke="#e0283c" stroke-width="1.100"/></symbol>
<symbol id="i-par" viewBox="0 0 17 15"><rect x=".600" y=".600" width="12" height="10" rx="1" fill="#fff" stroke="#50505a" stroke-width="1.100"/><rect x="7" y="7" width="9.400" height="7.400" rx="1" fill="#dcdcf8" stroke="#9a9af0" stroke-width="1.100"/><path d="M2.500 2.500l4 4" stroke="#1c1c3c" stroke-width="1.300"/><path d="M7.500 3.500v4h-4z" fill="#1c1c3c"/></symbol>
<symbol id="i-mot" viewBox="0 0 17 11"><path d="M2.500 5.500h12" stroke="#9aa0ac" stroke-width="1.200"/><rect x="6.300" y=".600" width="4" height="9.800" rx="1" fill="#b4b9c6" stroke="#8e94a0"/><circle cx="2.300" cy="5.500" r="1.700" fill="#dfe2ea" stroke="#8e94a0"/><circle cx="14.500" cy="5.500" r="1.700" fill="#dfe2ea" stroke="#8e94a0"/></symbol>
<symbol id="i-motg" viewBox="0 0 17 11"><path d="M2.500 5.500h12" stroke="#2e9e5a" stroke-width="1.200"/><rect x="6.300" y=".600" width="4" height="9.800" rx="1" fill="#3fb46c" stroke="#22804a"/><circle cx="2.300" cy="5.500" r="1.800" fill="#3fb46c" stroke="#22804a" stroke-width=".6"/><circle cx="14.500" cy="5.500" r="1.800" fill="#3fb46c" stroke="#22804a" stroke-width=".6"/></symbol>
<symbol id="i-gear" viewBox="0 0 16 16"><g fill="#8a8e98"><circle cx="8" cy="8" r="6"/><rect x="6.500" y="0" width="3" height="16" rx=".5"/><rect x="6.500" y="0" width="3" height="16" rx=".5" transform="rotate(45 8 8)"/><rect x="6.500" y="0" width="3" height="16" rx=".5" transform="rotate(90 8 8)"/><rect x="6.500" y="0" width="3" height="16" rx=".5" transform="rotate(135 8 8)"/></g><circle cx="8" cy="8" r="3.700" fill="#f2d4d8" stroke="#d03848" stroke-width="1.700"/><rect x="7" y="7" width="2" height="2" fill="#8c1420"/></symbol>
<symbol id="i-mute" viewBox="0 0 14 14"><circle cx="7" cy="7" r="5.600" fill="#fdfdff" stroke="#9c9cec" stroke-width="1.800"/><path d="M3 3l8 8" stroke="#9c9cec" stroke-width="1.800"/></symbol>
<symbol id="i-solo" viewBox="0 0 6 14"><path d="M1.200 0h3.600l-.8 9.500h-2z" fill="#9a92c8" stroke="#7a72a8" stroke-width=".5"/><circle cx="3" cy="12" r="1.700" fill="#9a92c8" stroke="#7a72a8" stroke-width=".5"/></symbol>
<symbol id="i-up" viewBox="0 0 14 13"><path d="M5 0l4.500 5h-3v5h-3v-5h-3z" fill="#9c9ca0"/><rect x="4.500" y="9.500" width="9" height="3" fill="#ececee" stroke="#d0d0d4" stroke-width=".8"/></symbol>
<symbol id="i-dn" viewBox="0 0 14 13"><rect x=".500" y=".500" width="9" height="3" fill="#ececee" stroke="#d0d0d4" stroke-width=".8"/><path d="M9 13l4.500-5h-3v-5h-3v5h-3z" fill="#9c9ca0"/></symbol>
<symbol id="i-dnb" viewBox="0 0 14 13"><rect x=".500" y=".500" width="9" height="3" fill="#dcdcf8" stroke="#9a9af0" stroke-width=".9"/><path d="M9 13l4.500-5h-3v-4.500h-3v4.500h-3z" fill="#303058"/></symbol>
<symbol id="i-alpha" viewBox="0 0 16 15"><rect x="0" y="0" width="11" height="10" fill="#1e1e22"/><rect x="1.500" y="2.500" width="8" height="5" fill="#a6dcae"/><path d="M1 1.200h9.500M1 8.800h9.500" stroke="#fff" stroke-width="1" stroke-dasharray="1.500 1.200"/><rect x="5" y="5" width="10.400" height="9.400" fill="#a6dcae" stroke="#8a8ae8" stroke-width="1.100"/><text x="6.400" y="12.800" font-family="DejaVu Sans,sans-serif" font-size="9" fill="#0a0a14" letter-spacing="0">α</text></symbol>
<symbol id="i-min" viewBox="0 0 14 8"><rect x=".600" y=".600" width="12.800" height="6.800" rx="2" fill="#d8d8f6" stroke="#9a9ae0" stroke-width="1.100"/><rect x="3" y="2.500" width="8" height="1.800" fill="#fff"/></symbol>
<symbol id="i-max" viewBox="0 0 14 8"><rect x=".600" y=".600" width="12.800" height="6.800" rx="2" fill="#d8d8f6" stroke="#9a9ae0" stroke-width="1.100"/><rect x="3" y="2.300" width="8" height="3.400" fill="none" stroke="#fff" stroke-width="1.200"/></symbol>
<symbol id="i-res" viewBox="0 0 14 9"><rect x=".600" y=".600" width="12.800" height="7.800" rx="2" fill="#d8d8f6" stroke="#9a9ae0" stroke-width="1.100"/><rect x="3" y="3" width="5" height="3.400" fill="none" stroke="#fff" stroke-width="1.100"/><rect x="9" y="2.200" width="2.200" height="2.600" fill="none" stroke="#fff" stroke-width=".9"/></symbol>
<symbol id="i-thumb" viewBox="0 0 19 13"><rect x=".500" y=".500" width="18" height="12" rx="2.500" fill="#d9dde2" stroke="#8a939c"/><rect x="1.500" y="1.500" width="16" height="5" rx="2" fill="#f1f3f5"/><path d="M7.500 3.500v6M9.500 3.500v6M11.500 3.500v6" stroke="#6a7480"/></symbol>
</defs></svg>
<div class="a" style="left:0;top:0;width:260px;height:1000px">
<div class="hl" style="left:3px;top:483px;width:250px;background:#a4a4a8"></div><div class="hl" style="left:4px;top:484px;width:248px;background:#fff"></div>
<div class="vl" style="left:3px;top:483px;height:444px;background:#a4a4a8"></div><div class="vl" style="left:4px;top:484px;height:443px;background:#fff"></div>
<div class="vl" style="left:252px;top:484px;height:443px;background:#a4a4a8"></div><div class="vl" style="left:253px;top:484px;height:443px;background:#fff"></div>
<div class="hl" style="left:3px;top:926px;width:250px;background:#a4a4a8"></div><div class="hl" style="left:3px;top:927px;width:251px;background:#fff"></div>
<svg style="left:7px;top:442px" width="6" height="30" viewBox="0 0 6 30"><g fill="#4e4e58"><circle cx="3" cy="2.500" r="1.900"/><circle cx="3" cy="7.400" r="1.900"/><circle cx="3" cy="12.300" r="1.900"/><circle cx="3" cy="17.200" r="1.900"/><circle cx="3" cy="22.100" r="1.900"/><circle cx="3" cy="27" r="1.900"/></g><g fill="#c8c8d0"><circle cx="3.900" cy="3.400" r=".8"/><circle cx="3.900" cy="8.300" r=".8"/><circle cx="3.900" cy="13.200" r=".8"/><circle cx="3.900" cy="18.100" r=".8"/><circle cx="3.900" cy="23" r=".8"/><circle cx="3.900" cy="27.900" r=".8"/></g></svg>
<div class="t" style="left:50px;top:447.5px;width:200px;text-align:right;font-size:23px;line-height:28px;letter-spacing:0;color:#6a6858;transform:scaleX(.885);transform-origin:100% 50%">00:00:00,00</div>
<div style="left:5px;top:573px;width:247px;height:62px;background:#c4c4ce"></div>
<svg style="left:7px;top:487px" width="14" height="9"><use href="#i-res" width="14" height="9"/></svg>
<div style="left:24px;top:487px;width:25px;height:17px;border:1px solid #2a7a68;border-radius:3px;background:linear-gradient(180deg,#56b5a2,#2f8c79);box-shadow:inset 0 1px 0 rgba(255,255,255,.35)"></div><div class="t" style="left:26px;top:489px;width:20px;text-align:right;color:#fff;font-size:12px;line-height:14px;letter-spacing:0">1</div>
<div style="left:27px;top:489px;width:4px;height:4px;background:#fff"></div>
<svg style="left:75px;top:489px" width="14" height="13"><use href="#i-up" width="14" height="13"/></svg>
<svg style="left:95px;top:489px" width="14" height="13"><use href="#i-dn" width="14" height="13"/></svg>
<svg style="left:118px;top:488px" width="15" height="15"><use href="#i-comp" width="15" height="15"/></svg><svg style="left:140px;top:488px" width="17" height="15"><use href="#i-par" width="17" height="15"/></svg><svg style="left:166px;top:491px" width="17" height="11"><use href="#i-mot" width="17" height="11"/></svg><svg style="left:188px;top:488px" width="16" height="16"><use href="#i-gear" width="16" height="16"/></svg><svg style="left:213px;top:489px" width="14" height="14"><use href="#i-mute" width="14" height="14"/></svg><svg style="left:237px;top:489px" width="6" height="13"><use href="#i-solo" width="6" height="13"/></svg>
<div class="hl" style="left:5px;top:507px;width:247px;background:#a4a4a8"></div><div class="hl" style="left:5px;top:508px;width:247px;background:#fff"></div>
<svg style="left:7px;top:511px" width="14" height="8"><use href="#i-min" width="14" height="8"/></svg>
<svg style="left:7px;top:520px" width="14" height="8"><use href="#i-max" width="14" height="8"/></svg>
<div style="left:24px;top:511px;width:25px;height:17px;border:1px solid #5d4288;border-radius:3px;background:linear-gradient(180deg,#9178bd,#6c4f9c);box-shadow:inset 0 1px 0 rgba(255,255,255,.35)"></div><div class="t" style="left:26px;top:513px;width:20px;text-align:right;color:#fff;font-size:12px;line-height:14px;letter-spacing:0">2</div>
<div style="left:52px;top:511px;width:62px;height:18px;background:#e9e9eb;border:1px solid;border-color:#cfcfd3 #f4f4f6 #f4f4f6 #cfcfd3"></div>
<svg style="left:118px;top:512px" width="15" height="15"><use href="#i-comp" width="15" height="15"/></svg><svg style="left:140px;top:512px" width="17" height="15"><use href="#i-par" width="17" height="15"/></svg><svg style="left:166px;top:515px" width="17" height="11"><use href="#i-mot" width="17" height="11"/></svg><svg style="left:188px;top:512px" width="16" height="16"><use href="#i-gear" width="16" height="16"/></svg><svg style="left:213px;top:513px" width="14" height="14"><use href="#i-mute" width="14" height="14"/></svg><svg style="left:237px;top:513px" width="6" height="13"><use href="#i-solo" width="6" height="13"/></svg>
<div class="t" style="left:26px;top:536px;letter-spacing:.05px">Level: 100,0 %</div>
<div class="hl" style="left:118px;top:541px;width:46px;background:#8a8a8e"></div><div class="hl" style="left:118px;top:542px;width:46px;background:#fff"></div><svg style="left:162px;top:535px" width="19" height="13"><use href="#i-thumb" width="19" height="13"/></svg>
<svg style="left:191px;top:534px" width="16" height="15"><use href="#i-alpha" width="16" height="15"/></svg>
<svg style="left:213px;top:535px" width="14" height="13"><use href="#i-up" width="14" height="13"/></svg>
<svg style="left:232px;top:535px" width="14" height="13"><use href="#i-dnb" width="14" height="13"/></svg>
<div class="hl" style="left:5px;top:571px;width:247px;background:#a4a4a8"></div><div class="hl" style="left:5px;top:572px;width:247px;background:#fff"></div>
<svg style="left:7px;top:575px" width="14" height="8"><use href="#i-min" width="14" height="8"/></svg>
<svg style="left:7px;top:584px" width="14" height="8"><use href="#i-max" width="14" height="8"/></svg>
<div style="left:24px;top:575px;width:25px;height:17px;border:1px solid #468a92;border-radius:3px;background:linear-gradient(180deg,#7fc3c7,#4f9ca4);box-shadow:inset 0 1px 0 rgba(255,255,255,.35)"></div><div class="t" style="left:26px;top:577px;width:20px;text-align:right;color:#fff;font-size:12px;line-height:14px;letter-spacing:0">3</div>
<div style="left:52px;top:575px;width:62px;height:18px;background:#e9e9eb;border:1px solid;border-color:#cfcfd3 #f4f4f6 #f4f4f6 #cfcfd3"></div>
<svg style="left:118px;top:576px" width="15" height="15"><use href="#i-comp" width="15" height="15"/></svg><svg style="left:140px;top:576px" width="17" height="15"><use href="#i-par" width="17" height="15"/></svg><svg style="left:166px;top:579px" width="17" height="11"><use href="#i-mot" width="17" height="11"/></svg><svg style="left:188px;top:576px" width="16" height="16"><use href="#i-gear" width="16" height="16"/></svg><svg style="left:213px;top:577px" width="14" height="14"><use href="#i-mute" width="14" height="14"/></svg><svg style="left:237px;top:577px" width="6" height="13"><use href="#i-solo" width="6" height="13"/></svg>
<div class="t" style="left:26px;top:600px;letter-spacing:.05px">Level: 100,0 %</div>
<div class="hl" style="left:118px;top:605px;width:46px;background:#8a8a8e"></div><div class="hl" style="left:118px;top:606px;width:46px;background:#fff"></div><svg style="left:162px;top:599px" width="19" height="13"><use href="#i-thumb" width="19" height="13"/></svg>
<svg style="left:191px;top:598px" width="16" height="15"><use href="#i-alpha" width="16" height="15"/></svg>
<svg style="left:213px;top:599px" width="14" height="13"><use href="#i-up" width="14" height="13"/></svg>
<svg style="left:232px;top:599px" width="14" height="13"><use href="#i-dnb" width="14" height="13"/></svg>
<div class="hl" style="left:5px;top:635px;width:247px;background:#a4a4a8"></div><div class="hl" style="left:5px;top:636px;width:247px;background:#fff"></div>
<svg style="left:7px;top:639px" width="14" height="9"><use href="#i-res" width="14" height="9"/></svg>
<div style="left:24px;top:639px;width:25px;height:17px;border:1px solid #7a733a;border-radius:3px;background:linear-gradient(180deg,#b3ad6e,#8c8446);box-shadow:inset 0 1px 0 rgba(255,255,255,.35)"></div><div class="t" style="left:26px;top:641px;width:20px;text-align:right;color:#fff;font-size:12px;line-height:14px;letter-spacing:0">4</div>
<svg style="left:75px;top:641px" width="14" height="13"><use href="#i-up" width="14" height="13"/></svg>
<svg style="left:95px;top:641px" width="14" height="13"><use href="#i-dnb" width="14" height="13"/></svg>
<svg style="left:118px;top:640px" width="15" height="15"><use href="#i-comp" width="15" height="15"/></svg><svg style="left:140px;top:640px" width="17" height="15"><use href="#i-par" width="17" height="15"/></svg><svg style="left:166px;top:643px" width="17" height="11"><use href="#i-mot" width="17" height="11"/></svg><svg style="left:188px;top:640px" width="16" height="16"><use href="#i-gear" width="16" height="16"/></svg><svg style="left:213px;top:641px" width="14" height="14"><use href="#i-mute" width="14" height="14"/></svg><svg style="left:237px;top:641px" width="6" height="13"><use href="#i-solo" width="6" height="13"/></svg>
<div class="hl" style="left:5px;top:659px;width:247px;background:#a4a4a8"></div><div class="hl" style="left:5px;top:660px;width:247px;background:#fff"></div>
<svg style="left:7px;top:663px" width="14" height="9"><use href="#i-res" width="14" height="9"/></svg>
<div style="left:24px;top:663px;width:25px;height:17px;border:1px solid #3b567e;border-radius:3px;background:linear-gradient(180deg,#6f8cb6,#45648f);box-shadow:inset 0 1px 0 rgba(255,255,255,.35)"></div><div class="t" style="left:26px;top:665px;width:20px;text-align:right;color:#fff;font-size:12px;line-height:14px;letter-spacing:0">5</div>
<svg style="left:75px;top:665px" width="14" height="13"><use href="#i-up" width="14" height="13"/></svg>
<svg style="left:95px;top:665px" width="14" height="13"><use href="#i-dnb" width="14" height="13"/></svg>
<svg style="left:118px;top:664px" width="15" height="15"><use href="#i-comp" width="15" height="15"/></svg><svg style="left:140px;top:664px" width="17" height="15"><use href="#i-par" width="17" height="15"/></svg><svg style="left:166px;top:667px" width="17" height="11"><use href="#i-mot" width="17" height="11"/></svg><svg style="left:188px;top:664px" width="16" height="16"><use href="#i-gear" width="16" height="16"/></svg><svg style="left:213px;top:665px" width="14" height="14"><use href="#i-mute" width="14" height="14"/></svg><svg style="left:237px;top:665px" width="6" height="13"><use href="#i-solo" width="6" height="13"/></svg>
<div class="hl" style="left:5px;top:683px;width:247px;background:#a4a4a8"></div><div class="hl" style="left:5px;top:684px;width:247px;background:#fff"></div>
<svg style="left:7px;top:687px" width="14" height="8"><use href="#i-min" width="14" height="8"/></svg>
<svg style="left:7px;top:696px" width="14" height="8"><use href="#i-max" width="14" height="8"/></svg>
<div style="left:24px;top:687px;width:25px;height:17px;border:1px solid #843644;border-radius:3px;background:linear-gradient(180deg,#bf6a78,#96404f);box-shadow:inset 0 1px 0 rgba(255,255,255,.35)"></div><div class="t" style="left:26px;top:689px;width:20px;text-align:right;color:#fff;font-size:12px;line-height:14px;letter-spacing:0">6</div>
<div style="left:52px;top:687px;width:54px;height:18px;background:#e9e9eb;border:1px solid;border-color:#cfcfd3 #f4f4f6 #f4f4f6 #cfcfd3"></div>
<svg style="left:111px;top:688px" width="15" height="15" viewBox="0 0 15 15"><circle cx="7.500" cy="7.500" r="6.300" fill="#fff" stroke="#d23646" stroke-width="1.300"/><circle cx="7.500" cy="7.500" r="3.300" fill="#c8606c" stroke="#8c1c2a" stroke-width="1.200"/></svg>
<svg style="left:134px;top:688px" width="15" height="15" viewBox="0 0 15 15"><circle cx="7.500" cy="7.500" r="4.800" fill="none" stroke="#8c9098" stroke-width="1.700"/><path d="M1.500 12.500Q6 11 7.500 7.500Q9 4 13.500 2.500" fill="none" stroke="#a0a0ee" stroke-width="2.200"/><path d="M1.500 12.500Q6 11 7.500 7.500Q9 4 13.500 2.500" fill="none" stroke="#f4f4ff" stroke-width=".7"/></svg>
<svg style="left:158px;top:690px" width="17" height="11"><use href="#i-motg" width="17" height="11"/></svg>
<svg style="left:178px;top:693px" width="6" height="4" viewBox="0 0 6 4"><path d="M0 0h6l-3 3.500z" fill="#222"/></svg>
<svg style="left:188px;top:688px" width="16" height="16"><use href="#i-gear" width="16" height="16"/></svg><svg style="left:213px;top:689px" width="14" height="14"><use href="#i-mute" width="14" height="14"/></svg><svg style="left:237px;top:689px" width="6" height="13"><use href="#i-solo" width="6" height="13"/></svg>
<div class="t" style="left:26px;top:711px">Vol:</div><div class="t" style="left:60px;top:711px;width:40px;text-align:right">-1,8 dB</div>
<div class="hl" style="left:112px;top:716px;width:126px;background:#8a8a8e"></div><div class="hl" style="left:112px;top:717px;width:126px;background:#fff"></div><svg style="left:170px;top:710px" width="19" height="13"><use href="#i-thumb" width="19" height="13"/></svg>
<div class="t" style="left:26px;top:730px">Pan:</div><div class="t" style="left:60px;top:730px;width:40px;text-align:right">Center</div>
<div class="hl" style="left:113px;top:735px;width:125px;background:#8a8a8e"></div><div class="hl" style="left:113px;top:736px;width:125px;background:#fff"></div><svg style="left:165px;top:729px" width="19" height="13"><use href="#i-thumb" width="19" height="13"/></svg>
<div class="hl" style="left:5px;top:747px;width:247px;background:#a4a4a8"></div><div class="hl" style="left:5px;top:748px;width:247px;background:#fff"></div>
<div class="t" style="left:6px;top:943px;letter-spacing:.2px">Rate: 0,00</div>
<div class="hl" style="left:89px;top:951px;width:152px;background:#8a8a8e"></div>
<svg style="left:150px;top:945px" width="27" height="12" viewBox="0 0 27 12"><path d="M0 6l6.500-5.500v11z" fill="#8e969e" stroke="#747c84" stroke-width=".6"/><path d="M7.500 6l6-5.500v11z" fill="#9aa2aa" stroke="#747c84" stroke-width=".6"/><path d="M13.500 .5l6 5.500-6 5.500z" fill="#b4bac0" stroke="#747c84" stroke-width=".6"/><path d="M26.500 6l-6.500-5.500v11z" fill="#8e969e" stroke="#747c84" stroke-width=".6"/></svg>
<svg style="left:173px;top:957px" width="12" height="11" viewBox="0 0 12 11"><path d="M6 .5l5.500 10h-11z" fill="#c49a50" stroke="#a87a30" stroke-width=".7"/></svg>
<div class="t" style="left:4px;top:979px">Complete: 00:00:04</div>
</div>
<!-- 70_bottom.html -->
<div class="a" style="left:0;top:0;width:1280px;height:1024px">
  <!-- right window edge -->
  <div class="vl" style="left:1276px;top:438px;height:534px;background:#a4a4a8"></div>
  <div class="vl" style="left:1277px;top:438px;height:534px;background:#fff"></div>
  <!-- vertical scrollbar of timeline -->
  <div style="left:1261px;top:438px;width:15px;height:489px;background:linear-gradient(90deg,#f0f0f6,#fdfdff)"></div>
  <div class="sb" style="left:1261px;top:438px;width:15px;height:15px"></div>
  <svg style="left:1264px;top:441px" width="10" height="11" viewBox="0 0 10 11"><path d="M1 0h8.500v7h-5.500l-3 3z" fill="#000"/><rect x="3" y="2" width="4.500" height="3" fill="#f4f4fa"/></svg>
  <div class="sb" style="left:1261px;top:455px;width:15px;height:15px"></div>
  <svg style="left:1264px;top:460px" width="9" height="6" viewBox="0 0 9 6"><path d="M1 5l3.500-3.500 3.500 3.500" fill="none" stroke="#3a3a44" stroke-width="1.800"/></svg>
  <div class="sbv" style="left:1261px;top:471px;width:15px;height:398px"></div>
  <div style="left:1266px;top:667px;width:6px;height:7px;background:repeating-linear-gradient(180deg,#8a8a9e 0,#8a8a9e 1px,#fff 1px,#fff 2px)"></div>
  <div class="sb" style="left:1261px;top:871px;width:15px;height:15px"></div>
  <svg style="left:1264px;top:876px" width="9" height="6" viewBox="0 0 9 6"><path d="M1 1l3.500 3.500 3.500-3.500" fill="none" stroke="#3a3a44" stroke-width="1.800"/></svg>
  <div class="sb" style="left:1261px;top:888px;width:15px;height:15px"></div>
  <div style="left:1265px;top:894px;width:7px;height:2px;background:#000"></div><div style="left:1267px;top:892px;width:2px;height:7px;background:#000"></div>
  <div class="sb" style="left:1261px;top:904px;width:15px;height:6px"></div>
  <div class="sb" style="left:1261px;top:911px;width:15px;height:15px"></div>
  <div style="left:1265px;top:918px;width:7px;height:2px;background:#000"></div>
  <!-- horizontal scrollbar -->
  <div style="left:260px;top:928px;width:1016px;height:16px;background:linear-gradient(180deg,#f0f0f6,#fdfdff)"></div>
  <div class="sb" style="left:261px;top:928px;width:15px;height:16px"></div>
  <svg style="left:265px;top:932px" width="6" height="9" viewBox="0 0 6 9"><path d="M5 1l-3.500 3.500 3.500 3.500" fill="none" stroke="#222" stroke-width="1.800"/></svg>
  <div class="sb" style="left:277px;top:928px;width:726px;height:16px"></div>
  <div style="left:280px;top:933px;width:5px;height:6px;background:repeating-linear-gradient(90deg,#8a8a9e 0,#8a8a9e 1px,#fff 1px,#fff 2px)"></div>
  <div style="left:996px;top:933px;width:5px;height:6px;background:repeating-linear-gradient(90deg,#8a8a9e 0,#8a8a9e 1px,#fff 1px,#fff 2px)"></div>
  <div class="sb" style="left:1204px;top:928px;width:15px;height:16px"></div>
  <svg style="left:1209px;top:932px" width="6" height="9" viewBox="0 0 6 9"><path d="M1 1l3.500 3.500-3.500 3.500" fill="none" stroke="#222" stroke-width="1.800"/></svg>
  <div class="sb" style="left:1221px;top:928px;width:15px;height:16px"></div>
  <div style="left:1225px;top:935px;width:7px;height:2px;background:#000"></div><div style="left:1227px;top:933px;width:2px;height:7px;background:#000"></div>
  <div class="sb" style="left:1238px;top:928px;width:5px;height:16px"></div>
  <div class="sb" style="left:1244px;top:928px;width:15px;height:16px"></div>
  <div style="left:1248px;top:935px;width:7px;height:2px;background:#000"></div>
  <div class="sb" style="left:1261px;top:928px;width:15px;height:16px"></div>
  <svg style="left:1264px;top:932px" width="10" height="10" viewBox="0 0 10 10"><circle cx="4" cy="4" r="3" fill="#fff" stroke="#000" stroke-width="1.200"/><path d="M6.300 6.300l2.500 2.500" stroke="#000" stroke-width="1.800"/></svg>
  <!-- transport bar -->
  <div class="vl" style="left:259px;top:944px;height:28px;background:#a4a4a8"></div>
  <div class="hl" style="left:260px;top:944px;width:1016px;background:#fff"></div>
  <div class="hl" style="left:259px;top:971px;width:1018px;background:#a4a4a8"></div>
  <div class="hl" style="left:259px;top:972px;width:1018px;background:#fff"></div>
  <svg style="left:267px;top:950px" width="16" height="16" viewBox="0 0 16 16"><circle cx="8" cy="8" r="6.600" fill="#fdf4f4" stroke="#d23646" stroke-width="1.200"/><circle cx="8" cy="8" r="3.300" fill="#c8707a" stroke="#8c1c2a" stroke-width="1.300"/></svg>
  <div class="sep" style="left:290px;top:949px;height:18px;background:#a8a8ac"></div><div class="sep" style="left:291px;top:949px;height:18px;background:#fff"></div>
  <svg style="left:300px;top:950px" width="14" height="15" viewBox="0 0 14 15"><path d="M9.500 3.600a5 5 0 1 0 2.600 4.400" fill="none" stroke="#5c6670" stroke-width="1.500"/><path d="M6.500 .5l4.500 3-4.500 3z" fill="#5c6670"/></svg>
  <div class="sep" style="left:322px;top:949px;height:18px;background:#a8a8ac"></div><div class="sep" style="left:323px;top:949px;height:18px;background:#fff"></div>
  <svg style="left:331px;top:951px" width="17" height="13" viewBox="0 0 17 13"><defs><linearGradient id="tg" x1="0" y1="0" x2="0" y2="1"><stop offset="0" stop-color="#a6aeb6"/><stop offset="1" stop-color="#6a747e"/></linearGradient></defs><rect x=".500" y=".500" width="2" height="12" fill="url(#tg)" stroke="#5c6670" stroke-width=".6"/><path d="M4 .800l12 5.700-12 5.700z" fill="#c2c8ce" stroke="#5c6670" stroke-width="1.100"/></svg>
  <svg style="left:355px;top:951px" width="16" height="13" viewBox="0 0 16 13"><path d="M.5 .5l15 6-15 6z" fill="url(#tg)"/></svg>
  <svg style="left:381px;top:951px" width="13" height="13" viewBox="0 0 13 13"><rect x=".500" y=".500" width="4" height="12" fill="url(#tg)" stroke="#6a747e" stroke-width=".6"/><rect x="8" y=".500" width="4" height="12" fill="url(#tg)" stroke="#6a747e" stroke-width=".6"/></svg>
  <svg style="left:405px;top:951px" width="13" height="13" viewBox="0 0 13 13"><rect x=".500" y=".500" width="12" height="12" fill="url(#tg)" stroke="#6a747e" stroke-width=".8"/></svg>
  <div class="sep" style="left:426px;top:949px;height:18px;background:#a8a8ac"></div><div class="sep" style="left:427px;top:949px;height:18px;background:#fff"></div>
  <svg style="left:437px;top:952px" width="13" height="12" viewBox="0 0 13 12"><rect x=".500" y=".300" width="2" height="11.400" fill="#6a747e"/><path d="M12.500 .300v11.400l-9-5.700z" fill="url(#tg)"/></svg>
  <svg style="left:461px;top:952px" width="13" height="12" viewBox="0 0 13 12"><rect x="10.500" y=".300" width="2" height="11.400" fill="#6a747e"/><path d="M.5 .300v11.400l9-5.700z" fill="url(#tg)"/></svg>
  <!-- time fields -->
  <div class="fld" style="left:1070px;top:950px;width:66px;height:16px"></div>
  <div class="t" style="left:1073px;top:952px;letter-spacing:-.05px">00:00:00,00</div>
  <div class="fld" style="left:1138px;top:950px;width:67px;height:16px"></div>
  <div class="fld" style="left:1207px;top:950px;width:67px;height:16px"></div>
  <!-- status bar -->
  <div class="fld" style="left:1052px;top:976px;width:225px;height:17px"></div>
  <div class="t" style="left:1055px;top:979px;letter-spacing:-.2px">Record Time (2 channels): 169:39:15</div>
</div>

<!-- 80_taskbar.html -->
<div class="a" style="left:0;top:994px;width:1280px;height:30px;background:linear-gradient(180deg,#7a7a9c 0,#7a7a9c 1px,#fff 1px,#fff 3px,#d8d8e4 3px,#d8d8e4 4px,#b0aec4 4px,#9a98b4 5px,#9a98b4 6.5px,#a3a5bd 9px,#b5b9c9 12px,#c1c3d1 15px,#cfcfd3 18px,#dfdfe1 21px,#e9e9eb 25px,#eef1ec 28px,#e0e0e8 29px,#80809e 29px,#80809e 30px)">
  <!-- start button -->
  <div style="left:0;top:0;width:97px;height:30px;border-radius:0 14px 14px 0/0 16px 16px 0;background:linear-gradient(180deg,#3c8f35 0,#7fcf78 2px,#4fae48 5px,#2f9a2c 12px,#238a22 20px,#2c9a2a 26px,#1d6e1c 30px);box-shadow:inset -3px 0 4px rgba(0,60,0,.55),inset 0 1px 1px rgba(255,255,255,.4)"></div>
  <svg style="left:9px;top:4px" width="22" height="22" viewBox="0 0 22 22">
    <path d="M2.500 4.500Q6 1.500 10 4l-1.700 6Q4.500 7.800 1 10z" fill="#e8542a"/>
    <path d="M11.300 4.300Q15 6.300 19 3.500l-1.800 6.200Q13.500 12 9.700 10z" fill="#7cc23c"/>
    <path d="M.8 11.200Q4.300 8.800 8 11l-1.700 6Q2.500 14.800-.8 17z" fill="#3a78e0"/>
    <path d="M9.400 11.500Q13 13.500 17 11l-1.800 6Q11.500 19.300 7.700 17.200z" fill="#f2c224"/>
  </svg>
  <div class="t" style="left:35px;top:5px;font:italic bold 17px 'Liberation Sans',sans-serif;line-height:20px;letter-spacing:-.2px;color:#fff;text-shadow:1px 1px 1px rgba(0,40,0,.7)">пуск</div>
  <!-- quick launch -->
  <svg style="left:108px;top:6px" width="16" height="16" viewBox="0 0 16 16"><circle cx="8" cy="8" r="7.300" fill="url(#vg)"/><path d="M2 6a6.500 6.500 0 0 1 12 0z" fill="#5f7f92" opacity=".75"/><rect x="3.300" y="5" width="9.200" height="6" rx="1" fill="#17191d"/><path d="M6 6.700l2.500 2.200" stroke="#6fd08c" stroke-width="1.100"/><path d="M8.600 9l1.600-1.700" stroke="#a98ae0" stroke-width="1.100"/></svg>
  <svg style="left:131px;top:5px" width="18" height="19" viewBox="0 0 18 19"><path d="M8 3l7 5.500-6 8-7-5.500z" fill="#fafafa" stroke="#3a3a40" stroke-width="1.100"/><path d="M8.500 6l3.500 2.800-3 4-3.500-2.800z" fill="#d8d8dc" stroke="#55555c" stroke-width=".6"/><path d="M15.500 1.500l-9.500 7.500 3.500.800-6.500 7.500 10.500-8-3.500-.800z" fill="#f7a21c" stroke="#e07a08" stroke-width=".5"/><path d="M14 3l-6.500 5.500 2.500.600" fill="none" stroke="#ffd978" stroke-width=".8"/></svg>
  <div style="left:154px;top:7px;width:15px;height:14px;background:linear-gradient(180deg,#2f9ae6,#1268c4);box-shadow:1px 1px 1px rgba(0,0,60,.4)"></div>
  <div class="t" style="left:156px;top:8px;font:bold 9.5px 'Liberation Sans',sans-serif;line-height:12px;color:#061a44;-webkit-text-stroke:0;letter-spacing:0">Ps</div>
  <svg style="left:182px;top:7px" width="9" height="6" viewBox="0 0 9 6"><path d="M.800 .500l2.500 2.500-2.500 2.500M5 .500l2.500 2.500-2.500 2.500" fill="none" stroke="#000" stroke-width="1.300"/></svg>
  <!-- task buttons -->
  <div style="left:198px;top:3px;width:159px;height:24px;border:1px solid #8f8fa8;border-radius:3px;background:linear-gradient(180deg,#fbfbfe,#e3e3ee 45%,#cfcfe0);box-shadow:inset 0 0 0 1px rgba(255,255,255,.9)"></div>
  <svg style="left:207px;top:7px" width="16" height="16" viewBox="0 0 16 16"><circle cx="8" cy="8" r="7.500" fill="#e23a2e"/><path d="M8 8L1.500 4.200A7.500 7.500 0 0 0 5 15z" fill="#2a9c48"/><path d="M8 8L5 15A7.500 7.500 0 0 0 15.400 7z" fill="#f6c81e"/><path d="M8 8l7.400-1A7.500 7.500 0 0 0 1.500 4.200z" fill="#e23a2e"/><circle cx="8" cy="8" r="3.500" fill="#fff"/><circle cx="8" cy="8" r="2.700" fill="#3f86e8"/></svg>
  <div class="t" style="left:226px;top:8px;letter-spacing:-.2px">Lina Vessalius - Googl...</div>
  <div style="left:359px;top:3px;width:158px;height:24px;border:1px solid #8f8fa8;border-radius:3px;background:linear-gradient(180deg,#fbfbfe,#e3e3ee 45%,#cfcfe0);box-shadow:inset 0 0 0 1px rgba(255,255,255,.9)"></div>
  <svg style="left:367px;top:6px" width="17" height="17" viewBox="0 0 17 17"><circle cx="8.500" cy="8.500" r="7.800" fill="#1c1a2e" stroke="#c89a2a" stroke-width="1.400"/><circle cx="8.500" cy="8.500" r="5.500" fill="#2a2a5a"/><text x="3.700" y="12" font-family="Liberation Serif,serif" font-weight="bold" font-size="10" fill="#f4c23a" letter-spacing="0">W</text></svg>
  <div class="t" style="left:387px;top:8px;letter-spacing:-.1px">World of Warcraft</div>
  <div style="left:518px;top:3px;width:159px;height:24px;border:1px solid #55626e;border-radius:3px;background:linear-gradient(180deg,#66747f,#76848f 50%,#8895a0);box-shadow:inset 1px 1px 1px rgba(30,40,50,.5)"></div>
  <svg style="left:528px;top:7px" width="16" height="16" viewBox="0 0 16 16"><circle cx="8" cy="8" r="7.300" fill="url(#vg)"/><path d="M2 6a6.500 6.500 0 0 1 12 0z" fill="#5f7f92" opacity=".75"/><rect x="3.300" y="5" width="9.200" height="6" rx="1" fill="#17191d"/><path d="M6 6.700l2.500 2.200" stroke="#6fd08c" stroke-width="1.100"/><path d="M8.600 9l1.600-1.700" stroke="#a98ae0" stroke-width="1.100"/></svg>
  <div class="t" style="left:547px;top:9px;color:#fff;letter-spacing:-.2px">ОсвДж.veg - Sony V...</div>
  <!-- lang -->
  <div style="left:1134px;top:8px;width:17px;height:16px;background:#a9a9bb"></div>
  <div class="t" style="left:1136px;top:10px;letter-spacing:0">EN</div>
  <!-- tray -->
  <div style="left:1170px;top:0;width:110px;height:30px;background:linear-gradient(180deg,#7a7a9c 0,#7a7a9c 1px,#fff 1px,#fff 6px,#ececf4 9px,#d4d4e2 13px,#c2c2d4 18px,#b4b4ca 24px,#a8a8c0 29px,#80809e 29px,#80809e 30px)"></div>
  <div class="vl" style="left:1169px;top:2px;height:28px;background:#8d8da8"></div>
  <svg style="left:1159px;top:5px" width="21" height="21" viewBox="0 0 21 21"><defs><radialGradient id="rb" cx="40%" cy="35%" r="70%"><stop offset="0" stop-color="#d8d8e6"/><stop offset=".6" stop-color="#9c9cb8"/><stop offset="1" stop-color="#6c6c8c"/></radialGradient></defs><circle cx="10.500" cy="10.500" r="9.500" fill="url(#rb)" stroke="#f4f4fa" stroke-width="1.200"/><circle cx="10.500" cy="10.500" r="10.200" fill="none" stroke="#7c7c9a" stroke-width=".6"/><path d="M12.500 6l-4.500 4.500 4.500 4.500" fill="none" stroke="#fff" stroke-width="2"/></svg>
  <svg style="left:1181px;top:7px" width="17" height="17" viewBox="0 0 17 17"><path d="M2 2Q5 0 7.500 2.500Q10 1 11 4L9 10H4Q0 7 2 2z" fill="#eef8e0" stroke="#8ac83a" stroke-width="1.300"/><circle cx="10.500" cy="10.500" r="5" fill="#f59a1c" stroke="#f8c860" stroke-width=".8"/><text x="8.300" y="14" font-family="Liberation Sans,sans-serif" font-weight="bold" font-size="9" fill="#3a2000" letter-spacing="0">1</text></svg>
  <svg style="left:1198px;top:7px" width="17" height="17" viewBox="0 0 17 17"><rect x=".5" y=".5" width="16" height="16" rx="2.500" fill="#d8141e"/><path d="M2 13Q4 4 9.500 4Q13 5.500 12 8.500Q9 9 8 7.500Q11 10 14.500 13.500" fill="none" stroke="#fff" stroke-width="1.700"/></svg>
  <svg style="left:1217px;top:7px" width="16" height="17" viewBox="0 0 16 17"><rect x="6.500" y=".5" width="8" height="7" fill="#5ab4f0" stroke="#c4dcf4"/><rect x="1.500" y="4.500" width="8" height="7" fill="#3c9ae8" stroke="#c4dcf4"/><path d="M4 12.500h4v2h-5zM10 8.500h3v2h-4z" fill="#c8c8d4" stroke="#9a9aac" stroke-width=".5"/><path d="M2 15.500h7M8.500 11.500h6" stroke="#b4b4c4" stroke-width="1.300"/></svg>
  <div class="t" style="left:1241px;top:9px;letter-spacing:.2px">0:19</div>
</div>

</div>
</body></html>
